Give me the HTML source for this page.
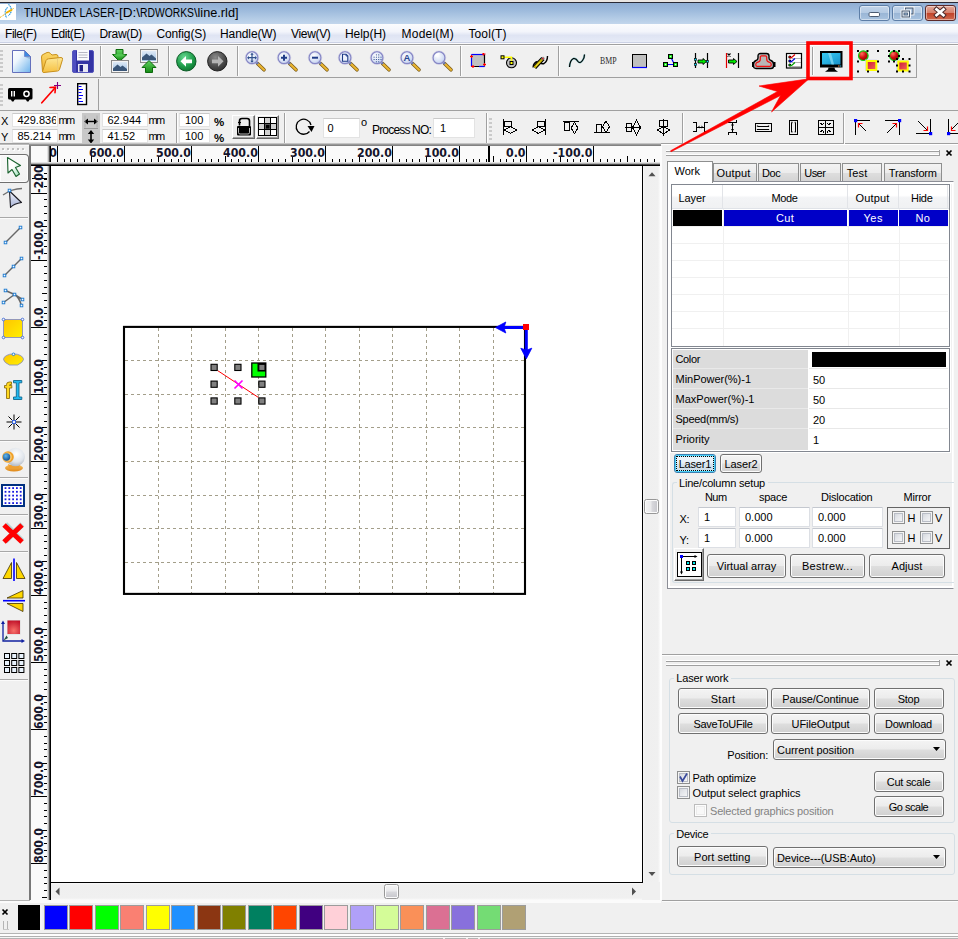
<!DOCTYPE html>
<html>
<head>
<meta charset="utf-8">
<title>THUNDER LASER-[D:\RDWORKS\line.rld]</title>
<style>
html,body{margin:0;padding:0;}
body{width:958px;height:939px;overflow:hidden;background:#f0f0f0;font-family:"Liberation Sans",sans-serif;font-size:11px;color:#000;}
#app{position:relative;width:958px;height:939px;overflow:hidden;background:#f0f0f0;}
.a{position:absolute;}
.t{position:absolute;white-space:nowrap;line-height:1;}
.inp{position:absolute;background:#fff;border:1px solid #e3e3e3;border-top-color:#c9c9c9;box-sizing:border-box;}
.btn{position:absolute;box-sizing:border-box;border:1px solid #707070;border-radius:3px;background:linear-gradient(#f4f4f4 0%,#ececec 48%,#dedede 52%,#d0d0d0 100%);text-align:center;white-space:nowrap;box-shadow:inset 0 0 0 1px #fcfcfc;}
.vsep{position:absolute;width:1px;background:#a6a6a6;box-shadow:1px 0 0 #fff;}
.tab{position:absolute;box-sizing:border-box;border:1px solid #8e8f8f;border-bottom:none;background:linear-gradient(#f3f3f3 0%,#ececec 50%,#dedede 52%,#d4d4d4 100%);height:18px;top:163px;}
.grp{position:absolute;box-sizing:border-box;border:1px solid #d5dfe5;border-radius:3px;}
.cb{position:absolute;box-sizing:border-box;width:13px;height:13px;border:1px solid #8e8f8f;background:linear-gradient(135deg,#c9cdd4 0%,#e4e6ea 45%,#fbfbfb 100%);box-shadow:inset 0 0 0 1px #f4f4f4,inset 0 0 0 2px #b9bdc6;}
svg{position:absolute;overflow:visible;}
</style>
</head>
<body>
<div id="app">
<div class="a" style="left:0px;top:0px;width:958px;height:2px;background:#e9e5e2;"></div>
<div class="a" style="left:0px;top:2px;width:958px;height:1px;background:#2a2a35;"></div>
<div class="a" style="left:0px;top:3px;width:958px;height:21px;background:linear-gradient(#90aed3 0%,#9dbadc 35%,#b4cce6 75%,#c2d6ec 100%);"></div>
<svg style="left:0;top:4px" width="17" height="17" viewBox="0 0 17 17">
<rect x="0" y="0" width="16" height="16" fill="#ffffff"/>
<path d="M8.500 0.300 Q12 4 11.200 7.500 Q10.500 10 8.300 11.800" stroke="#1890e0" stroke-width="1.100" fill="none" stroke-dasharray="1.400 0.700"/>
<path d="M7.600 3.300 Q4.800 6 5.200 9.500 Q5.400 12 6.800 13.800" stroke="#1890e0" stroke-width="1.100" fill="none" stroke-dasharray="1.600 0.600"/>
<path d="M0 13.500 L5.500 9.800" stroke="#f0b000" stroke-width="1" stroke-dasharray="1.100 0.800" fill="none"/>
<path d="M6 9 L12 5.600" stroke="#f0b000" stroke-width="1.800" fill="none"/>
<path d="M12 5.500 L14 4.200" stroke="#f0b000" stroke-width="0.900" stroke-dasharray="1 0.600" fill="none"/>
</svg>
<div class="t" style="left:24px;top:7px;font-size:12px;transform-origin:0 0;transform:scaleX(0.8969);">THUNDER LASER-</div>
<div class="t" style="left:118.6px;top:7px;font-size:12px;transform-origin:0 0;transform:scaleX(1.1247);">[D:\</div>
<div class="t" style="left:140px;top:7px;font-size:12px;transform-origin:0 0;transform:scaleX(0.8616);">RDWORKS</div>
<div class="t" style="left:194px;top:7px;font-size:12px;transform-origin:0 0;transform:scaleX(1.0587);">\line.rld]</div>
<div class="a" style="left:859px;top:5px;width:30.5px;height:16px;box-sizing:border-box;border:1px solid #5d7ea7;border-radius:3px;background:linear-gradient(#c3d5ea 0%,#b4cae3 48%,#9ab6d6 52%,#a9c3df 100%);box-shadow:inset 0 0 0 1px rgba(255,255,255,.45);"></div>
<div class="a" style="left:892px;top:5px;width:30.5px;height:16px;box-sizing:border-box;border:1px solid #5d7ea7;border-radius:3px;background:linear-gradient(#c3d5ea 0%,#b4cae3 48%,#9ab6d6 52%,#a9c3df 100%);box-shadow:inset 0 0 0 1px rgba(255,255,255,.45);"></div>
<div class="a" style="left:925px;top:5px;width:30.5px;height:16px;box-sizing:border-box;border:1px solid #5c2a2a;border-radius:3px;background:linear-gradient(#e3aa9b 0%,#d6806c 48%,#c1432a 52%,#cf6b50 100%);box-shadow:inset 0 0 0 1px rgba(255,255,255,.45);"></div>
<svg style="left:859px;top:5px" width="97" height="16" viewBox="0 0 97 16">
<rect x="10" y="7.500" width="10.500" height="4" rx="1.200" fill="#fff" stroke="#4b5b72" stroke-width="1"/>
<rect x="46.500" y="3" width="7.500" height="6" fill="none" stroke="#fff" stroke-width="2.800"/>
<rect x="46.500" y="3" width="7.500" height="6" fill="#b4cae3" stroke="#44566e" stroke-width="1"/>
<rect x="43" y="6" width="7.500" height="6" fill="#b4cae3" stroke="#fff" stroke-width="2.800"/>
<rect x="43" y="6" width="7.500" height="6" fill="#eaf0f7" stroke="#44566e" stroke-width="1"/>
<rect x="45" y="8" width="3.500" height="2" fill="#9ab6d6" stroke="#44566e" stroke-width="0.800"/>
<path d="M77.500 4.300 L84.500 10.200 M84.500 4.300 L77.500 10.200" stroke="#4a2a2a" stroke-width="4.600" stroke-linecap="square"/>
<path d="M77.500 4.300 L84.500 10.200 M84.500 4.300 L77.500 10.200" stroke="#fff" stroke-width="2.700" stroke-linecap="square"/>
</svg>
<div class="a" style="left:0px;top:24px;width:958px;height:19px;background:linear-gradient(#fbfcfe 0%,#f3f5fb 40%,#dfe4f3 60%,#e4e9f6 85%,#eef1f9 100%);"></div>
<div class="a" style="left:0px;top:42px;width:958px;height:1px;background:#cbd1e4;"></div>
<div class="a" style="left:0px;top:43px;width:958px;height:1px;background:#fbfbfd;"></div>
<div class="t" style="left:5px;top:28px;font-size:12px;letter-spacing:-0.453px;">File(F)</div>
<div class="t" style="left:51px;top:28px;font-size:12px;letter-spacing:-0.455px;">Edit(E)</div>
<div class="t" style="left:99.5px;top:28px;font-size:12px;letter-spacing:-0.310px;">Draw(D)</div>
<div class="t" style="left:156.5px;top:28px;font-size:12px;letter-spacing:-0.132px;">Config(S)</div>
<div class="t" style="left:220px;top:28px;font-size:12px;letter-spacing:-0.095px;">Handle(W)</div>
<div class="t" style="left:291px;top:28px;font-size:12px;letter-spacing:-0.328px;">View(V)</div>
<div class="t" style="left:345px;top:28px;font-size:12px;letter-spacing:-0.049px;">Help(H)</div>
<div class="t" style="left:401.5px;top:28px;font-size:12px;letter-spacing:0.229px;">Model(M)</div>
<div class="t" style="left:468.5px;top:28px;font-size:12px;letter-spacing:0.094px;">Tool(T)</div>
<div class="a" style="left:0px;top:44px;width:958px;height:1px;background:#a0a0a0;"></div>
<div class="a" style="left:0px;top:45px;width:958px;height:1px;background:#fcfcfc;"></div>
<div class="a" style="left:0px;top:46px;width:916px;height:31px;background:#f0f0f0;"></div>
<div class="a" style="left:0px;top:77px;width:917px;height:1px;background:#a0a0a0;"></div>
<div class="a" style="left:916px;top:45px;width:1px;height:33px;background:#a0a0a0;"></div>
<div class="a" style="left:0px;top:110px;width:958px;height:1px;background:#a0a0a0;"></div>
<div class="a" style="left:98px;top:79px;width:1px;height:31px;background:#a0a0a0;"></div>
<div class="a" style="left:0px;top:143px;width:958px;height:1px;background:#a0a0a0;"></div>
<div class="a" style="left:661px;top:144px;width:297px;height:1px;background:#fff;"></div>
<div class="a" style="left:0px;top:50px;width:3px;height:24px;background:repeating-linear-gradient(#cacaca 0 2px,transparent 2px 4px);"></div>
<div class="a" style="left:0px;top:84px;width:3px;height:22px;background:repeating-linear-gradient(#cacaca 0 2px,transparent 2px 4px);"></div>
<div class="a" style="left:489px;top:118px;width:3px;height:24px;background:repeating-linear-gradient(#cacaca 0 2px,transparent 2px 4px);"></div>
<svg width="0" height="0" style="left:0;top:0"><defs>
<linearGradient id="gDoc" x1="0" y1="0" x2="1" y2="1"><stop offset="0" stop-color="#ffffff"/><stop offset="0.35" stop-color="#eef6fd"/><stop offset="1" stop-color="#6cb2ec"/></linearGradient>
<linearGradient id="gFold" x1="0" y1="0" x2="0" y2="1"><stop offset="0" stop-color="#fbd868"/><stop offset="1" stop-color="#f0b030"/></linearGradient>
<linearGradient id="gFold2" x1="0" y1="0" x2="0" y2="1"><stop offset="0" stop-color="#fde898"/><stop offset="1" stop-color="#f6c040"/></linearGradient>
<linearGradient id="gGreen" x1="0" y1="0" x2="0" y2="1"><stop offset="0" stop-color="#5fd25f"/><stop offset="1" stop-color="#158a15"/></linearGradient>
<linearGradient id="gSky" x1="0" y1="0" x2="0" y2="1"><stop offset="0" stop-color="#dfeaf6"/><stop offset="1" stop-color="#9fc0e4"/></linearGradient>
<radialGradient id="gBall" cx="0.4" cy="0.3" r="0.8"><stop offset="0" stop-color="#66d890"/><stop offset="0.6" stop-color="#1c9a48"/><stop offset="1" stop-color="#0b6a2c"/></radialGradient>
<radialGradient id="gBallG" cx="0.4" cy="0.3" r="0.8"><stop offset="0" stop-color="#8a8a8a"/><stop offset="0.6" stop-color="#4a4a4a"/><stop offset="1" stop-color="#2a2a2a"/></radialGradient>
<radialGradient id="gLens" cx="0.4" cy="0.35" r="0.7"><stop offset="0" stop-color="#ffffff"/><stop offset="0.7" stop-color="#d4def4"/><stop offset="1" stop-color="#b4c2ea"/></radialGradient>
<radialGradient id="gRed" cx="0.35" cy="0.3" r="0.8"><stop offset="0" stop-color="#ff7060"/><stop offset="0.5" stop-color="#d01010"/><stop offset="1" stop-color="#800000"/></radialGradient>
<linearGradient id="gRedSq" x1="0" y1="0" x2="1" y2="1"><stop offset="0" stop-color="#c81838"/><stop offset="1" stop-color="#f86858"/></linearGradient>
<linearGradient id="gMon" x1="0" y1="0" x2="1" y2="1"><stop offset="0" stop-color="#38c8f0"/><stop offset="0.5" stop-color="#28b0e0"/><stop offset="1" stop-color="#1890c8"/></linearGradient>
</defs></svg>
<svg style="left:12px;top:50px" width="19" height="23" viewBox="0 0 19 23"><path d="M0.500 0.500 H12.500 L18.500 6.500 V22.500 H0.500 Z" fill="url(#gDoc)" stroke="#6470bc" stroke-width="1"/>
<path d="M12.500 0.500 V6.500 H18.500 Z" fill="#3c8ae0" stroke="#6470bc" stroke-width="0.600"/>
<path d="M13 7 H18 V9 Z" fill="#7fa6cc" opacity="0.700"/></svg>
<svg style="left:40px;top:51px" width="24" height="22" viewBox="0 0 24 22"><path d="M2.500 20.500 L1.500 6 Q1.500 3.500 4 3 L7 1.500 Q9 0.800 10.500 2.500 L12 4 L16 3.500 Q18 3.500 18 5.500 L18 7" fill="url(#gFold)" stroke="#c8901c" stroke-width="1"/>
<path d="M2.500 20.500 L6 9.500 Q6.600 8 8.500 7.800 L21 6.500 Q23 6.500 22.500 8.500 L19.500 18.500 Q19 19.800 17.500 20 L4 21.500 Q2.500 21.500 2.500 20.500 Z" fill="url(#gFold2)" stroke="#c8901c" stroke-width="1"/>
<path d="M17.500 7.200 V19.500" stroke="#e8c878" stroke-width="0.800" fill="none"/></svg>
<svg style="left:72px;top:50px" width="22" height="23" viewBox="0 0 22 23"><path d="M2 0.500 H20 Q21.500 0.500 21.500 2 V21 Q21.500 22.500 20 22.500 H2 Q0.500 22.500 0.500 21 V2 Q0.500 0.500 2 0.500 Z" fill="#3434a4" stroke="#5858bc" stroke-width="1"/>
<rect x="1" y="1" width="3" height="21" fill="#4e4ec0"/>
<rect x="5" y="0" width="12" height="10.500" fill="#fbfbfd"/>
<path d="M6.500 2.500 H15.500 M6.500 5 H15.500 M6.500 7.500 H15.500" stroke="#b8b8c4" stroke-width="1"/>
<rect x="6" y="14" width="10" height="8" fill="#e8e8f4"/>
<rect x="7.500" y="15" width="3.500" height="6.500" fill="#202088"/></svg>
<div class="a" style="left:100px;top:46px;width:1px;height:30px;background:#a0a0a0;"></div>
<div class="a" style="left:101px;top:46px;width:1px;height:30px;background:#fdfdfd;"></div>
<svg style="left:111px;top:49px" width="19" height="24" viewBox="0 0 19 24"><path d="M5 0.500 H12 V5.500 H16 L8.500 12.500 L1.500 5.500 H5 Z" fill="url(#gGreen)" stroke="#0c6a0c" stroke-width="1"/>
<rect x="0.500" y="11.500" width="17" height="12" fill="#f4f4f4" stroke="#8a8a8a" stroke-width="1"/>
<rect x="2" y="13" width="14" height="9" fill="url(#gSky)"/>
<path d="M2 22 V19.500 L6.500 15.500 L9.500 18 L11.500 16.500 L16 20 V22 Z" fill="#3a5678"/>
<path d="M3 5.500 H14 L8.500 11 Z" fill="url(#gGreen)"/></svg>
<svg style="left:139px;top:49px" width="19" height="24" viewBox="0 0 19 24"><rect x="1.500" y="0.500" width="17" height="13" fill="#f4f4f4" stroke="#8a8a8a" stroke-width="1"/>
<rect x="3" y="2" width="14" height="10" fill="url(#gSky)"/>
<path d="M3 11 V8.500 L7.500 4.500 L10.500 7 L12.500 5.500 L17 9.500 V11 Z" fill="#3a5678"/>
<path d="M6.500 23.500 V18.500 H3 L10 11.500 L17 18.500 H13.500 V23.500 Z" fill="url(#gGreen)" stroke="#0c6a0c" stroke-width="1"/></svg>
<div class="a" style="left:168px;top:46px;width:1px;height:30px;background:#a0a0a0;"></div>
<div class="a" style="left:169px;top:46px;width:1px;height:30px;background:#fdfdfd;"></div>
<svg style="left:176px;top:51px" width="21" height="21" viewBox="0 0 21 21"><circle cx="10.300" cy="10.300" r="9.700" fill="url(#gBall)" stroke="#0a5a24" stroke-width="1"/>
<path d="M4.500 10.300 L10 5 V8.500 H16 V12.200 H10 V15.700 Z" fill="#fff"/></svg>
<svg style="left:207px;top:51px" width="21" height="21" viewBox="0 0 21 21"><circle cx="10.300" cy="10.300" r="9.700" fill="url(#gBallG)" stroke="#222" stroke-width="1"/>
<path d="M16.500 10.300 L11 5 V8.500 H5 V12.200 H11 V15.700 Z" fill="#b4b4b4"/></svg>
<div class="a" style="left:237px;top:46px;width:1px;height:30px;background:#a0a0a0;"></div>
<div class="a" style="left:238px;top:46px;width:1px;height:30px;background:#fdfdfd;"></div>
<svg style="left:243.5px;top:50px" width="22" height="22" viewBox="0 0 22 22"><path d="M13.500 13.500 L20 19.800" stroke="#7a5a18" stroke-width="3.600" stroke-linecap="round"/>
<path d="M13.800 13.800 L20 19.800" stroke="#eab530" stroke-width="2.200" stroke-linecap="round"/>
<path d="M12 12 L14 14" stroke="#6878b8" stroke-width="2.400"/>
<circle cx="8" cy="7.700" r="6" fill="url(#gLens)" stroke="#8484c4" stroke-width="1.300"/>
<circle cx="8" cy="7.700" r="6.800" fill="none" stroke="#c0c0e0" stroke-width="0.600" opacity="0.700"/><path d="M8 3.700 V11.700 M4 7.700 H12" stroke="#30508c" stroke-width="1.200"/><path d="M8 2.700 L6.300 4.700 H9.700 Z M8 12.700 L6.300 10.700 H9.700 Z M3 7.700 L5 6 V9.400 Z M13 7.700 L11 6 V9.400 Z" fill="#30508c"/></svg>
<svg style="left:275.5px;top:50px" width="22" height="22" viewBox="0 0 22 22"><path d="M13.500 13.500 L20 19.800" stroke="#7a5a18" stroke-width="3.600" stroke-linecap="round"/>
<path d="M13.800 13.800 L20 19.800" stroke="#eab530" stroke-width="2.200" stroke-linecap="round"/>
<path d="M12 12 L14 14" stroke="#6878b8" stroke-width="2.400"/>
<circle cx="8" cy="7.700" r="6" fill="url(#gLens)" stroke="#8484c4" stroke-width="1.300"/>
<circle cx="8" cy="7.700" r="6.800" fill="none" stroke="#c0c0e0" stroke-width="0.600" opacity="0.700"/><path d="M8 4.700 V10.700 M5 7.700 H11" stroke="#203c88" stroke-width="2"/></svg>
<svg style="left:306.5px;top:50px" width="22" height="22" viewBox="0 0 22 22"><path d="M13.500 13.500 L20 19.800" stroke="#7a5a18" stroke-width="3.600" stroke-linecap="round"/>
<path d="M13.800 13.800 L20 19.800" stroke="#eab530" stroke-width="2.200" stroke-linecap="round"/>
<path d="M12 12 L14 14" stroke="#6878b8" stroke-width="2.400"/>
<circle cx="8" cy="7.700" r="6" fill="url(#gLens)" stroke="#8484c4" stroke-width="1.300"/>
<circle cx="8" cy="7.700" r="6.800" fill="none" stroke="#c0c0e0" stroke-width="0.600" opacity="0.700"/><path d="M5 7.700 H11" stroke="#203c88" stroke-width="2"/></svg>
<svg style="left:337px;top:50px" width="22" height="22" viewBox="0 0 22 22"><path d="M13.500 13.500 L20 19.800" stroke="#7a5a18" stroke-width="3.600" stroke-linecap="round"/>
<path d="M13.800 13.800 L20 19.800" stroke="#eab530" stroke-width="2.200" stroke-linecap="round"/>
<path d="M12 12 L14 14" stroke="#6878b8" stroke-width="2.400"/>
<circle cx="8" cy="7.700" r="6" fill="url(#gLens)" stroke="#8484c4" stroke-width="1.300"/>
<circle cx="8" cy="7.700" r="6.800" fill="none" stroke="#c0c0e0" stroke-width="0.600" opacity="0.700"/><path d="M5.500 4.200 H9 L10.800 6 V11.200 H5.500 Z" fill="#eef2fc" stroke="#203c88" stroke-width="1.100"/><path d="M9 4.200 V6 H10.800" fill="none" stroke="#203c88" stroke-width="0.800"/></svg>
<svg style="left:368.5px;top:50px" width="22" height="22" viewBox="0 0 22 22"><path d="M13.500 13.500 L20 19.800" stroke="#7a5a18" stroke-width="3.600" stroke-linecap="round"/>
<path d="M13.800 13.800 L20 19.800" stroke="#eab530" stroke-width="2.200" stroke-linecap="round"/>
<path d="M12 12 L14 14" stroke="#6878b8" stroke-width="2.400"/>
<circle cx="8" cy="7.700" r="6" fill="url(#gLens)" stroke="#8484c4" stroke-width="1.300"/>
<circle cx="8" cy="7.700" r="6.800" fill="none" stroke="#c0c0e0" stroke-width="0.600" opacity="0.700"/><rect x="4.6" y="6.7" width="1" height="1" fill="#30508c"/><rect x="4.6" y="9.0" width="1" height="1" fill="#30508c"/><rect x="6.9" y="4.4" width="1" height="1" fill="#30508c"/><rect x="6.9" y="6.7" width="1" height="1" fill="#30508c"/><rect x="6.9" y="9.0" width="1" height="1" fill="#30508c"/><rect x="6.9" y="11.3" width="1" height="1" fill="#30508c"/><rect x="9.2" y="4.4" width="1" height="1" fill="#30508c"/><rect x="9.2" y="6.7" width="1" height="1" fill="#30508c"/><rect x="9.2" y="9.0" width="1" height="1" fill="#30508c"/><rect x="9.2" y="11.3" width="1" height="1" fill="#30508c"/><rect x="11.5" y="6.7" width="1" height="1" fill="#30508c"/><rect x="11.5" y="9.0" width="1" height="1" fill="#30508c"/></svg>
<svg style="left:399px;top:50px" width="22" height="22" viewBox="0 0 22 22"><path d="M13.500 13.500 L20 19.800" stroke="#7a5a18" stroke-width="3.600" stroke-linecap="round"/>
<path d="M13.800 13.800 L20 19.800" stroke="#eab530" stroke-width="2.200" stroke-linecap="round"/>
<path d="M12 12 L14 14" stroke="#6878b8" stroke-width="2.400"/>
<circle cx="8" cy="7.700" r="6" fill="url(#gLens)" stroke="#8484c4" stroke-width="1.300"/>
<circle cx="8" cy="7.700" r="6.800" fill="none" stroke="#c0c0e0" stroke-width="0.600" opacity="0.700"/><text x="8" y="11.200" font-family="Liberation Sans,sans-serif" font-weight="bold" font-size="9.500" text-anchor="middle" fill="#284890">A</text></svg>
<svg style="left:431px;top:50px" width="22" height="22" viewBox="0 0 22 22"><path d="M13.500 13.500 L20 19.800" stroke="#7a5a18" stroke-width="3.600" stroke-linecap="round"/>
<path d="M13.800 13.800 L20 19.800" stroke="#eab530" stroke-width="2.200" stroke-linecap="round"/>
<path d="M12 12 L14 14" stroke="#6878b8" stroke-width="2.400"/>
<circle cx="8" cy="7.700" r="6" fill="url(#gLens)" stroke="#8484c4" stroke-width="1.300"/>
<circle cx="8" cy="7.700" r="6.800" fill="none" stroke="#c0c0e0" stroke-width="0.600" opacity="0.700"/><path d="M4.500 6.500 Q5.500 3.800 8.500 3.800" stroke="#fff" stroke-width="1.600" fill="none"/></svg>
<div class="a" style="left:459.5px;top:46px;width:1px;height:30px;background:#a0a0a0;"></div>
<div class="a" style="left:460.5px;top:46px;width:1px;height:30px;background:#fdfdfd;"></div>
<svg style="left:470px;top:53px" width="17" height="16" viewBox="0 0 17 16"><rect x="1.500" y="1.500" width="13" height="12" fill="#c0c0c0"/>
<path d="M1.500 1.500 H14.500" stroke="#0000ff" stroke-width="1.200"/><path d="M1.500 1.500 V13.500" stroke="#0000ff" stroke-width="1.200"/>
<path d="M14.500 1.500 V13.500 M1.500 13.500 H9" stroke="#000" stroke-width="1.200"/><path d="M9 13.500 H14.500" stroke="#0000ff" stroke-width="1.200"/>
<path d="M0 3.500 H3 M1.500 2 V5 M12 1 H15.500 M13.500 0 V2.500 M13 11.500 H16 M14.500 10 V13 M1 13.500 H4.500 M3 12 V15" stroke="#ff0000" stroke-width="1.200"/></svg>
<svg style="left:500px;top:53px" width="20" height="18" viewBox="0 0 20 18"><circle cx="11.500" cy="9.800" r="5" fill="#c0c0c0" stroke="#000" stroke-width="1.100"/>
<path d="M3 4.300 H11.500 V9" stroke="#ffff00" stroke-width="1.400" fill="none"/>
<rect x="1" y="2.800" width="3" height="3" fill="#ffff00" stroke="#000" stroke-width="1"/>
<rect x="10" y="8.500" width="3" height="3" fill="#ffff00" stroke="#000" stroke-width="1"/></svg>
<svg style="left:531px;top:53px" width="20" height="18" viewBox="0 0 20 18"><path d="M2 14.500 Q2.500 9.500 6.500 8.500" stroke="#000" stroke-width="1.300" fill="none"/>
<path d="M9 9.500 Q11 11.500 13 10.500 Q16.500 8.500 16.500 3" stroke="#000" stroke-width="1.400" fill="none"/>
<path d="M3.500 14.500 L12 5.500" stroke="#000" stroke-width="4.400" stroke-linecap="butt"/>
<path d="M3.500 14.500 L11 6.500" stroke="#c8b400" stroke-width="2.400"/>
<path d="M5 13 L9 8.800" stroke="#f0e040" stroke-width="0.900"/>
<path d="M11 6.500 L13 4.300" stroke="#909090" stroke-width="2.600"/><rect x="11" y="4.800" width="1.500" height="1.500" fill="#e02020"/></svg>
<div class="a" style="left:558px;top:46px;width:1px;height:30px;background:#a0a0a0;"></div>
<div class="a" style="left:559px;top:46px;width:1px;height:30px;background:#fdfdfd;"></div>
<svg style="left:567px;top:53px" width="20" height="16" viewBox="0 0 20 16"><path d="M2.500 14 Q3 7 6.500 5.500 Q9 5 11 8.500 Q13 11 15.500 7.500 Q17.500 5 17.500 1.500" stroke="#008890" stroke-width="1.900" fill="none" opacity="0.500"/>
<path d="M2.500 14 Q3 7 6.500 5.500 Q9 5 11 8.500 Q13 11 15.500 7.500 Q17.500 5 17.500 1.500" stroke="#000" stroke-width="1.100" fill="none"/></svg>
<div class="t" style="left:599.8px;top:56.5px;font-size:9.5px;font-family:'Liberation Serif',sans-serif;transform-origin:0 0;transform:scaleX(0.8218);color:#2c2c2c;">BMP</div>
<svg style="left:632px;top:54px" width="16" height="14" viewBox="0 0 16 14"><rect x="0.500" y="0.500" width="14" height="13" fill="#c0c0c0" stroke="#000" stroke-width="1"/><path d="M0 13.500 H15" stroke="#0000ff" stroke-width="1.200"/></svg>
<svg style="left:662px;top:53px" width="18" height="16" viewBox="0 0 18 16"><path d="M8.500 3.500 L12.500 11.500 H3" stroke="#0000ff" stroke-width="1.200" fill="none"/>
<rect x="6.500" y="1.500" width="4" height="4" fill="#00e000" stroke="#000"/><rect x="1.500" y="9.500" width="4" height="4" fill="#00e000" stroke="#000"/><rect x="11.500" y="9.500" width="4" height="4" fill="#00e000" stroke="#000"/>
<rect x="7.800" y="2.800" width="1.500" height="1.500" fill="#d0ffd0"/><rect x="2.800" y="10.800" width="1.500" height="1.500" fill="#d0ffd0"/><rect x="12.800" y="10.800" width="1.500" height="1.500" fill="#d0ffd0"/></svg>
<svg style="left:693px;top:52px" width="17" height="17" viewBox="0 0 17 17"><path d="M2.500 1 V16 M14.500 1 V16" stroke="#000" stroke-width="1.200"/>
<path d="M5 8 H10 V6.500 L13.500 9.500 L10 12.500 V11 H5 Z" fill="#00e800" stroke="#000" stroke-width="0.900"/>
<rect x="1.500" y="6.500" width="2" height="2" fill="#00e0ff" stroke="#000" stroke-width="0.600"/><rect x="1.500" y="11.500" width="2" height="2" fill="#00e0ff" stroke="#000" stroke-width="0.600"/><rect x="13.500" y="8.500" width="2" height="2" fill="#00e0ff" stroke="#000" stroke-width="0.600"/></svg>
<svg style="left:725px;top:52px" width="16" height="17" viewBox="0 0 16 17"><path d="M1.500 1 V16" stroke="#e00000" stroke-width="1.200"/><path d="M13.500 1 V16" stroke="#000" stroke-width="1.200"/>
<path d="M2.500 1.500 L5.500 4.500 M5.500 1.500 L2.500 4.500" stroke="#000" stroke-width="1.100"/>
<path d="M3.500 8 H8.500 V6.500 L12 9.500 L8.500 12.500 V11 H3.500 Z" fill="#00e800" stroke="#000" stroke-width="0.900"/></svg>
<svg style="left:752px;top:52px" width="24" height="18" viewBox="0 0 24 18"><path d="M8.500 1.500 H14.500 Q17 1.500 17 4 V6 Q17 8 19 8.500 Q21.500 9.500 21.500 12 V14 Q21.500 16.500 19 16.500 H4 Q1.500 16.500 1.500 14 V12 Q1.500 9.500 4 8.500 Q6 8 6 6 V4 Q6 1.500 8.500 1.500 Z" fill="#b8b8b8" stroke="#000" stroke-width="1.400"/>
<path d="M9.700 3.900 H13.300 Q14.700 3.900 14.700 5.200 V7 Q14.700 9.600 17 10.200 Q19.200 10.800 19.200 12.200 V13 Q19.200 14.300 17.900 14.300 H5.100 Q3.800 14.300 3.800 13 V12.200 Q3.800 10.800 6 10.200 Q8.300 9.600 8.300 7 V5.200 Q8.300 3.900 9.700 3.900 Z" fill="none" stroke="#f01010" stroke-width="1.200"/>
<rect x="0" y="10" width="1.800" height="5" fill="#000"/><rect x="21.700" y="10" width="1.800" height="5" fill="#000"/></svg>
<svg style="left:786px;top:53px" width="17" height="16" viewBox="0 0 17 16"><rect x="0.500" y="0.500" width="15" height="14.500" fill="#fff" stroke="#000" stroke-width="1.200"/>
<path d="M6 5.500 H15 M6 9.500 H15 M6 13.500 H15" stroke="#a0a0a0" stroke-width="0.800"/>
<circle cx="3.800" cy="4" r="1.500" fill="#000"/><circle cx="3.800" cy="8" r="1.500" fill="#000"/><circle cx="3.800" cy="12" r="1.500" fill="#000"/>
<path d="M3 3.500 L5 5 L9 1.500" stroke="#e00000" stroke-width="1.100" fill="none"/><path d="M3 7.500 L5 9 L9 5.500" stroke="#0000e0" stroke-width="1.100" fill="none"/><path d="M3 11.500 L5 13 L9 9.500" stroke="#00a000" stroke-width="1.100" fill="none"/></svg>
<div class="a" style="left:812px;top:47px;width:1px;height:28px;background:#a0a0a0;"></div>
<div class="a" style="left:813px;top:47px;width:1px;height:28px;background:#fdfdfd;"></div>
<svg style="left:819px;top:50px" width="25" height="23" viewBox="0 0 25 23"><rect x="1" y="1" width="22.500" height="16.500" fill="#000"/>
<rect x="3" y="3" width="18.500" height="11.500" fill="url(#gMon)"/>
<path d="M9 3 L12 3 L15 14.500 L12.500 14.500 Z" fill="#8fe0f8" opacity="0.700"/>
<path d="M9.500 17.500 H15.500 L16 19.500 L19 21.800 H6 L9 19.500 Z" fill="#000"/>
<rect x="19" y="15.500" width="1.500" height="1" fill="#f08030"/><rect x="20.700" y="15.500" width="1.500" height="1" fill="#30c0f0"/></svg>
<svg style="left:857px;top:50px" width="24" height="23" viewBox="0 0 24 23"><circle cx="6.300" cy="5.700" r="4.800" fill="url(#gRed)" stroke="#10d010" stroke-width="1.200"/>
<rect x="8" y="9.500" width="12" height="11.500" fill="#c8c8f0" opacity="0.600"/>
<rect x="9.800" y="11" width="9.500" height="9" fill="url(#gRedSq)" stroke="#ffff00" stroke-width="2"/><rect x="0" y="0" width="2" height="2" fill="#000"/><rect x="9.5" y="0" width="2" height="2" fill="#000"/><rect x="20" y="0" width="2" height="2" fill="#000"/><rect x="0" y="10.5" width="2" height="2" fill="#000"/><rect x="20" y="10.5" width="2" height="2" fill="#000"/><rect x="0" y="20.5" width="2" height="2" fill="#000"/><rect x="10" y="20.5" width="2" height="2" fill="#000"/><rect x="20" y="20.5" width="2" height="2" fill="#000"/></svg>
<svg style="left:888px;top:50px" width="24" height="23" viewBox="0 0 24 23"><circle cx="6.300" cy="5.700" r="4.800" fill="url(#gRed)" stroke="#10d010" stroke-width="1.200"/>
<rect x="8" y="9.500" width="12" height="11.500" fill="#c8c8f0" opacity="0.600"/>
<rect x="10.300" y="11.500" width="9.500" height="9" fill="url(#gRedSq)" stroke="#ffff00" stroke-width="2"/><rect x="0" y="0" width="2" height="2" fill="#000"/><rect x="5" y="0" width="2" height="2" fill="#000"/><rect x="10" y="0" width="2" height="2" fill="#000"/><rect x="0" y="5" width="2" height="2" fill="#000"/><rect x="10" y="5" width="2" height="2" fill="#000"/><rect x="0" y="10.5" width="2" height="2" fill="#000"/><rect x="5" y="10.5" width="2" height="2" fill="#000"/><rect x="8" y="8" width="2" height="2" fill="#000"/><rect x="14" y="8" width="2" height="2" fill="#000"/><rect x="20.5" y="8" width="2" height="2" fill="#000"/><rect x="8" y="14.5" width="2" height="2" fill="#000"/><rect x="20.5" y="14.5" width="2" height="2" fill="#000"/><rect x="8" y="20.5" width="2" height="2" fill="#000"/><rect x="14" y="20.5" width="2" height="2" fill="#000"/><rect x="20.5" y="20.5" width="2" height="2" fill="#000"/></svg>
<svg style="left:8px;top:87px" width="26" height="16" viewBox="0 0 26 16"><rect x="0" y="1" width="24.500" height="11.500" rx="1.500" fill="#000"/>
<path d="M2.500 12 H7 L5.500 14.500 H4 Z M17.500 12 H22 L20.500 14.500 H19 Z" fill="#000"/>
<rect x="3" y="4" width="1.400" height="5.500" fill="#fff"/><rect x="5.600" y="4" width="1.400" height="5.500" fill="#fff"/>
<circle cx="18.500" cy="6.800" r="2.600" fill="#000" stroke="#fff" stroke-width="1.500"/></svg>
<svg style="left:40px;top:81px" width="24" height="24" viewBox="0 0 24 24"><path d="M1.800 21.800 L14.500 7.500" stroke="#ff0000" stroke-width="1.700" stroke-linecap="round"/>
<path d="M10 6.500 L15.500 6.200 L15 11.800" stroke="#ff0000" stroke-width="1.600" fill="none" stroke-linecap="round"/>
<path d="M17.500 1 V8 M14 4.500 H21" stroke="#800080" stroke-width="1.100"/></svg>
<svg style="left:77px;top:83px" width="11" height="23" viewBox="0 0 11 23"><rect x="0.700" y="0.700" width="8.800" height="20.800" fill="#fff" stroke="#000" stroke-width="1.400"/>
<path d="M1.500 3.500 H4.500 M1.500 6.500 H6 M1.500 9.500 H4.500 M1.500 12.500 H6 M1.500 15.500 H4.500 M1.500 18.500 H6" stroke="#0000ff" stroke-width="1.100"/></svg>
<div class="t" style="left:1px;top:116.2px;font-size:11px;letter-spacing:-0.844px;">X</div>
<div class="t" style="left:1px;top:132.2px;font-size:11px;letter-spacing:-0.844px;">Y</div>
<div class="inp" style="left:12px;top:113px;width:46px;height:14px;overflow:hidden;"><span class="t" style="left:4.5px;top:1.2px;font-size:11px;">429.836</span></div>
<div class="inp" style="left:12px;top:129px;width:46px;height:14px;overflow:hidden;"><span class="t" style="left:4.5px;top:1.2px;font-size:11px;">85.214</span></div>
<div class="t" style="left:58.5px;top:115.3px;font-size:11px;letter-spacing:-1.564px;">mm</div>
<div class="t" style="left:58.5px;top:131.3px;font-size:11px;letter-spacing:-1.564px;">mm</div>
<div class="a" style="left:55.5px;top:114px;width:1.5px;height:12px;background:#fff;"></div>
<div class="a" style="left:82px;top:113px;width:18px;height:31px;background:#c8c8c8;"></div>
<div class="a" style="left:84px;top:128px;width:14px;height:1px;background:#9a9a9a;"></div>
<svg style="left:82px;top:113px" width="18" height="31" viewBox="0 0 18 31"><path d="M3 8.500 H15" stroke="#000" stroke-width="1.400"/><path d="M2 8.500 L6 5.500 V11.500 Z M16 8.500 L12 5.500 V11.500 Z" fill="#000"/>
<path d="M3 2.500 V14.500 M15 2.500 V14.500" stroke="#a8a8a8" stroke-width="0.800"/>
<path d="M9 19 V28" stroke="#000" stroke-width="1.600"/><path d="M9 17 L5.800 21 H12.200 Z M9 30.500 L5.800 26.500 H12.200 Z" fill="#000"/><path d="M5.500 30.500 H12.500" stroke="#000" stroke-width="1"/></svg>
<div class="inp" style="left:102px;top:113px;width:46px;height:14px;overflow:hidden;"><span class="t" style="left:4.5px;top:1.2px;font-size:11px;">62.944</span></div>
<div class="inp" style="left:102px;top:129px;width:46px;height:14px;overflow:hidden;"><span class="t" style="left:4.5px;top:1.2px;font-size:11px;">41.52</span></div>
<div class="t" style="left:148.5px;top:115.3px;font-size:11px;letter-spacing:-1.564px;">mm</div>
<div class="t" style="left:148.5px;top:131.3px;font-size:11px;letter-spacing:-1.564px;">mm</div>
<div class="a" style="left:176px;top:113px;width:1px;height:31px;background:#a0a0a0;"></div>
<div class="a" style="left:177px;top:113px;width:1px;height:31px;background:#fdfdfd;"></div>
<div class="inp" style="left:179px;top:113px;width:31px;height:14px;overflow:hidden;"><span class="t" style="left:5px;top:1.2px;font-size:11px;">100</span></div>
<div class="inp" style="left:179px;top:129px;width:31px;height:14px;overflow:hidden;"><span class="t" style="left:5px;top:1.2px;font-size:11px;">100</span></div>
<div class="t" style="left:214px;top:116.8px;font-size:11.5px;font-weight:bold;letter-spacing:0.266px;">%</div>
<div class="t" style="left:214px;top:132.8px;font-size:11.5px;font-weight:bold;letter-spacing:0.266px;">%</div>
<div class="a" style="left:232px;top:115px;width:23px;height:24px;box-sizing:border-box;background:#ececec;border:1px solid;border-color:#fff #6a6a6a #6a6a6a #fff;box-shadow:inset -1px -1px 0 #a0a0a0;"></div>
<div class="a" style="left:256px;top:115px;width:23px;height:24px;box-sizing:border-box;background:#ececec;border:1px solid;border-color:#fff #6a6a6a #6a6a6a #fff;box-shadow:inset -1px -1px 0 #a0a0a0;"></div>
<svg style="left:236px;top:117px" width="16" height="20" viewBox="0 0 16 20"><path d="M3.500 8.500 V4 Q3.500 1.500 6 1.500 H11 Q13.500 1.500 13.500 4 V9" stroke="#000" stroke-width="1.600" fill="none"/>
<path d="M2 5.500 H5" stroke="#000" stroke-width="1.200"/>
<rect x="1" y="9" width="14" height="9.500" rx="1" fill="#000"/>
<path d="M2.500 11 V15.500 Q2.500 17 4 17 H12 Q13.500 17 13.500 15.500 V11" stroke="#e8e8e8" stroke-width="0.800" fill="none"/></svg>
<svg style="left:258px;top:117px" width="19" height="20" viewBox="0 0 19 20"><rect x="0" y="0" width="19" height="19" fill="#000"/><rect x="1" y="1" width="5" height="5" fill="#ffffff"/><rect x="1" y="7" width="5" height="5" fill="#d2d2d2"/><rect x="1" y="13" width="5" height="5" fill="#ffffff"/><rect x="7" y="1" width="5" height="5" fill="#d2d2d2"/><rect x="7" y="7" width="5" height="5" fill="#181818"/><rect x="7" y="13" width="5" height="5" fill="#d2d2d2"/><rect x="13" y="1" width="5" height="5" fill="#ffffff"/><rect x="13" y="7" width="5" height="5" fill="#d2d2d2"/><rect x="13" y="13" width="5" height="5" fill="#ffffff"/><rect x="7" y="7" width="5" height="5" fill="#585858"/><rect x="8" y="8" width="3.500" height="3.500" fill="#000"/></svg>
<div class="a" style="left:284px;top:113px;width:1px;height:31px;background:#a0a0a0;"></div>
<div class="a" style="left:285px;top:113px;width:1px;height:31px;background:#fdfdfd;"></div>
<svg style="left:294px;top:118px" width="22" height="20" viewBox="0 0 22 20"><path d="M15.500 13.500 A7.500 7.500 0 1 1 17 7" stroke="#000" stroke-width="1.300" fill="none"/>
<path d="M13.500 8 H20.500 L17.500 14 Z" fill="#000"/></svg>
<div class="inp" style="left:323px;top:118px;width:37px;height:20px;overflow:hidden;"><span class="t" style="left:3.5px;top:4.2px;font-size:11px;">0</span></div>
<div class="t" style="left:361px;top:117px;font-size:11px;">o</div>
<div class="t" style="left:372px;top:123.6px;font-size:12px;letter-spacing:-0.820px;">Process NO:</div>
<div class="inp" style="left:433px;top:118px;width:42px;height:20px;overflow:hidden;"><span class="t" style="left:6px;top:4.2px;font-size:11px;">1</span></div>
<div class="a" style="left:486px;top:113px;width:1px;height:31px;background:#a0a0a0;"></div>
<div class="a" style="left:487px;top:113px;width:1px;height:31px;background:#fdfdfd;"></div>
<svg style="left:500px;top:118px" width="20" height="18" viewBox="0 0 20 18"><path d="M3.500 1 V17" stroke="#000" stroke-width="1" fill="none" shape-rendering="crispEdges" stroke-width="1.300"/><rect x="4.500" y="3.500" width="7" height="5" stroke="#000" stroke-width="1" fill="none" shape-rendering="crispEdges"/><path d="M4.500 12 L10.500 8.500 L16.500 12 L10.500 15.500 Z" stroke="#000" stroke-width="1" fill="none" shape-rendering="crispEdges"/></svg>
<svg style="left:530px;top:118px" width="20" height="18" viewBox="0 0 20 18"><path d="M15.500 1 V17" stroke="#000" stroke-width="1" fill="none" shape-rendering="crispEdges" stroke-width="1.300"/><rect x="7.500" y="3.500" width="7" height="5" stroke="#000" stroke-width="1" fill="none" shape-rendering="crispEdges"/><path d="M2.500 12 L8.500 8.500 L14.500 12 L8.500 15.500 Z" stroke="#000" stroke-width="1" fill="none" shape-rendering="crispEdges"/></svg>
<svg style="left:561px;top:118px" width="20" height="18" viewBox="0 0 20 18"><path d="M1.500 3.500 H18" stroke="#000" stroke-width="1" fill="none" shape-rendering="crispEdges" stroke-width="1.300"/><rect x="3.500" y="4.500" width="5" height="8" stroke="#000" stroke-width="1" fill="none" shape-rendering="crispEdges"/><path d="M13.500 4.500 L17 10 L13.500 15.500 L10 10 Z" stroke="#000" stroke-width="1" fill="none" shape-rendering="crispEdges"/></svg>
<svg style="left:592px;top:118px" width="20" height="18" viewBox="0 0 20 18"><path d="M1.500 14.500 H18" stroke="#000" stroke-width="1" fill="none" shape-rendering="crispEdges" stroke-width="1.300"/><rect x="4.500" y="6.500" width="5" height="8" stroke="#000" stroke-width="1" fill="none" shape-rendering="crispEdges"/><path d="M14 3 L17.500 8.800 L14 14.500 L10.500 8.800 Z" stroke="#000" stroke-width="1" fill="none" shape-rendering="crispEdges"/></svg>
<svg style="left:623px;top:118px" width="20" height="18" viewBox="0 0 20 18"><path d="M1.500 9.500 H18" stroke="#000" stroke-width="1" fill="none" shape-rendering="crispEdges"/><rect x="3.500" y="5.500" width="5" height="8" stroke="#000" stroke-width="1" fill="none" shape-rendering="crispEdges"/><path d="M13.500 2 L17.500 9.500 L13.500 17 L9.500 9.500 Z" stroke="#000" stroke-width="1" fill="none" shape-rendering="crispEdges"/></svg>
<svg style="left:655px;top:118px" width="18" height="18" viewBox="0 0 18 18"><path d="M8.500 0.500 V17.500" stroke="#000" stroke-width="1" fill="none" shape-rendering="crispEdges"/><rect x="4.500" y="2.500" width="8" height="6" stroke="#000" stroke-width="1" fill="none" shape-rendering="crispEdges"/><path d="M2.500 12 L8.500 8.500 L14.500 12 L8.500 16 Z" stroke="#000" stroke-width="1" fill="none" shape-rendering="crispEdges"/></svg>
<div class="a" style="left:682px;top:113px;width:1px;height:31px;background:#a0a0a0;"></div>
<div class="a" style="left:683px;top:113px;width:1px;height:31px;background:#fdfdfd;"></div>
<svg style="left:692px;top:121px" width="18" height="12" viewBox="0 0 18 12"><path d="M1 1.500 H4.500 V10.500 H1 M16 1.500 H12.500 V10.500 H16 M4.500 6 H12.500" stroke="#000" stroke-width="1" fill="none" shape-rendering="crispEdges" stroke-width="1.200"/><path d="M6 6 L7.500 4.500 V7.500 Z M11 6 L9.500 4.500 V7.500 Z" fill="#000"/></svg>
<svg style="left:726px;top:118px" width="14" height="18" viewBox="0 0 14 18"><path d="M2.500 1.500 V4.500 H10.500 V1.500 M2.500 17 V14 H10.500 V17 M6.500 4.500 V14" stroke="#000" stroke-width="1" fill="none" shape-rendering="crispEdges" stroke-width="1.200"/><path d="M6.500 5 L5 7.500 H8 Z M6.500 13.500 L5 11 H8 Z" fill="#000"/></svg>
<svg style="left:754px;top:122px" width="18" height="11" viewBox="0 0 18 11"><rect x="1.200" y="1.700" width="15.800" height="8" stroke="#000" stroke-width="1" fill="none" shape-rendering="crispEdges" stroke-width="1.500"/><path d="M3.500 4 H14.500 M3.500 7.500 H14.500" stroke="#000" stroke-width="1" fill="none" shape-rendering="crispEdges" stroke-width="0.900"/><path d="M3.500 3.500 V8 M14.500 3.500 V8" stroke="#000" stroke-width="1.300" stroke-dasharray="1.200 2.300" fill="none"/></svg>
<svg style="left:788px;top:119px" width="11" height="17" viewBox="0 0 11 17"><rect x="1.200" y="1.200" width="8.600" height="13.800" stroke="#000" stroke-width="1" fill="none" shape-rendering="crispEdges" stroke-width="1.500"/><path d="M3.800 3.500 V12.800 M7.200 3.500 V12.800" stroke="#000" stroke-width="1" fill="none" shape-rendering="crispEdges" stroke-width="0.900"/><path d="M3.300 3.500 H7.700 M3.300 12.800 H7.700" stroke="#000" stroke-width="1.300" stroke-dasharray="1.200 2.200" fill="none"/></svg>
<svg style="left:817px;top:119px" width="18" height="17" viewBox="0 0 18 17"><rect x="1.200" y="1.500" width="14.800" height="14" stroke="#000" stroke-width="1" fill="none" shape-rendering="crispEdges" stroke-width="1.500"/><path d="M8.500 1.500 V15.500 M1 8.500 H16" stroke="#000" stroke-width="1" fill="none" shape-rendering="crispEdges" stroke-width="1.500"/><path d="M3.300 3.800 L5.300 5.800 M13.700 3.800 L11.700 5.800 M3.300 13.200 L5.300 11.200 M13.700 13.200 L11.700 11.200" stroke="#000" stroke-width="1" fill="none" shape-rendering="crispEdges" stroke-width="1"/><path d="M6.500 3.500 V5 M10.500 3.500 V5 M6.500 12 V13.500 M10.500 12 V13.500" stroke="#000" stroke-width="1" fill="none" shape-rendering="crispEdges" stroke-width="0.700"/></svg>
<div class="a" style="left:843px;top:113px;width:1px;height:31px;background:#a0a0a0;"></div>
<div class="a" style="left:844px;top:113px;width:1px;height:31px;background:#fdfdfd;"></div>
<svg style="left:853px;top:118px" width="18" height="18" viewBox="0 0 18 18"><path d="M2.500 2.500 H17 M2.500 2.500 V16.500" stroke="#000" stroke-width="1" fill="none" shape-rendering="crispEdges" stroke-width="1.200"/><path d="M13 13 L6 6" stroke="#000" stroke-width="1" fill="none" shape-rendering="crispEdges"/><path d="M5.500 9.500 V5.500 H9.500" stroke="#ff0000" stroke-width="1.200" fill="none"/><rect x="1" y="1" width="3.200" height="3.200" fill="#0000ff"/></svg>
<svg style="left:884px;top:118px" width="18" height="18" viewBox="0 0 18 18"><path d="M1 2.500 H15.500 M15.500 2.500 V16.500" stroke="#000" stroke-width="1" fill="none" shape-rendering="crispEdges" stroke-width="1.200"/><path d="M3 15 L12 6" stroke="#000" stroke-width="1" fill="none" shape-rendering="crispEdges"/><path d="M8.500 5.500 H12.500 V9.500" stroke="#ff0000" stroke-width="1.200" fill="none"/><rect x="14" y="1" width="3.200" height="3.200" fill="#0000ff"/></svg>
<svg style="left:915px;top:118px" width="18" height="18" viewBox="0 0 18 18"><path d="M15.500 1 V15.500 M1 15.500 H15.500" stroke="#000" stroke-width="1" fill="none" shape-rendering="crispEdges" stroke-width="1.200"/><path d="M3 3 L12 12" stroke="#000" stroke-width="1" fill="none" shape-rendering="crispEdges"/><path d="M12.500 8.500 V12.500 H8.500" stroke="#ff0000" stroke-width="1.200" fill="none"/><rect x="14" y="14" width="3.200" height="3.200" fill="#0000ff"/></svg>
<svg style="left:946px;top:118px" width="12" height="18" viewBox="0 0 12 18"><path d="M2.500 1 V15.500 M2.500 15.500 H12" stroke="#000" stroke-width="1" fill="none" shape-rendering="crispEdges" stroke-width="1.200"/><path d="M12 5 L5 12" stroke="#000" stroke-width="1" fill="none" shape-rendering="crispEdges"/><path d="M5.500 8.500 V12.500 H9.500" stroke="#ff0000" stroke-width="1.200" fill="none"/><rect x="1" y="14" width="3.200" height="3.200" fill="#0000ff"/></svg>
<div class="a" style="left:30px;top:146px;width:630px;height:20px;background:#fafafa;"></div>
<div class="a" style="left:30px;top:165px;width:21px;height:735px;background:#fafafa;"></div>
<div class="a" style="left:29px;top:144px;width:2px;height:756px;background:#787878;"></div>
<div class="a" style="left:0px;top:144px;width:29px;height:1px;background:#bcbcbc;"></div>
<div class="a" style="left:0px;top:145px;width:29px;height:1px;background:#f8f8f8;"></div>
<div class="a" style="left:29px;top:143px;width:632px;height:1px;background:#c4c4c4;"></div>
<div class="a" style="left:29px;top:144px;width:632px;height:1px;background:#989898;"></div>
<div class="a" style="left:29px;top:145px;width:632px;height:1px;background:#828282;"></div>
<div class="a" style="left:51px;top:166px;width:591px;height:716px;background:#ffffff;"></div>
<svg style="left:0px;top:0px" width="958" height="939" viewBox="0 0 958 939"><g fill="#000" shape-rendering="crispEdges"><rect x="654" y="159" width="1" height="3"/><rect x="647" y="159" width="1" height="3"/><rect x="640" y="159" width="1" height="3"/><rect x="634" y="159" width="1" height="3"/><rect x="627" y="156" width="1" height="6"/><rect x="620" y="159" width="1" height="3"/><rect x="614" y="159" width="1" height="3"/><rect x="607" y="159" width="1" height="3"/><rect x="600" y="159" width="1" height="3"/><rect x="593" y="146" width="1" height="16"/><rect x="587" y="159" width="1" height="3"/><rect x="580" y="159" width="1" height="3"/><rect x="573" y="159" width="1" height="3"/><rect x="567" y="159" width="1" height="3"/><rect x="560" y="156" width="1" height="6"/><rect x="553" y="159" width="1" height="3"/><rect x="547" y="159" width="1" height="3"/><rect x="540" y="159" width="1" height="3"/><rect x="533" y="159" width="1" height="3"/><rect x="526" y="146" width="1" height="16"/><rect x="520" y="159" width="1" height="3"/><rect x="513" y="159" width="1" height="3"/><rect x="506" y="159" width="1" height="3"/><rect x="500" y="159" width="1" height="3"/><rect x="493" y="156" width="1" height="6"/><rect x="486" y="159" width="1" height="3"/><rect x="479" y="159" width="1" height="3"/><rect x="473" y="159" width="1" height="3"/><rect x="466" y="159" width="1" height="3"/><rect x="459" y="146" width="1" height="16"/><rect x="453" y="159" width="1" height="3"/><rect x="446" y="159" width="1" height="3"/><rect x="439" y="159" width="1" height="3"/><rect x="433" y="159" width="1" height="3"/><rect x="426" y="156" width="1" height="6"/><rect x="419" y="159" width="1" height="3"/><rect x="412" y="159" width="1" height="3"/><rect x="406" y="159" width="1" height="3"/><rect x="399" y="159" width="1" height="3"/><rect x="392" y="146" width="1" height="16"/><rect x="386" y="159" width="1" height="3"/><rect x="379" y="159" width="1" height="3"/><rect x="372" y="159" width="1" height="3"/><rect x="365" y="159" width="1" height="3"/><rect x="359" y="156" width="1" height="6"/><rect x="352" y="159" width="1" height="3"/><rect x="345" y="159" width="1" height="3"/><rect x="339" y="159" width="1" height="3"/><rect x="332" y="159" width="1" height="3"/><rect x="325" y="146" width="1" height="16"/><rect x="319" y="159" width="1" height="3"/><rect x="312" y="159" width="1" height="3"/><rect x="305" y="159" width="1" height="3"/><rect x="298" y="159" width="1" height="3"/><rect x="292" y="156" width="1" height="6"/><rect x="285" y="159" width="1" height="3"/><rect x="278" y="159" width="1" height="3"/><rect x="272" y="159" width="1" height="3"/><rect x="265" y="159" width="1" height="3"/><rect x="258" y="146" width="1" height="16"/><rect x="251" y="159" width="1" height="3"/><rect x="245" y="159" width="1" height="3"/><rect x="238" y="159" width="1" height="3"/><rect x="231" y="159" width="1" height="3"/><rect x="225" y="156" width="1" height="6"/><rect x="218" y="159" width="1" height="3"/><rect x="211" y="159" width="1" height="3"/><rect x="205" y="159" width="1" height="3"/><rect x="198" y="159" width="1" height="3"/><rect x="191" y="146" width="1" height="16"/><rect x="184" y="159" width="1" height="3"/><rect x="178" y="159" width="1" height="3"/><rect x="171" y="159" width="1" height="3"/><rect x="164" y="159" width="1" height="3"/><rect x="158" y="156" width="1" height="6"/><rect x="151" y="159" width="1" height="3"/><rect x="144" y="159" width="1" height="3"/><rect x="138" y="159" width="1" height="3"/><rect x="131" y="159" width="1" height="3"/><rect x="124" y="146" width="1" height="16"/><rect x="117" y="159" width="1" height="3"/><rect x="111" y="159" width="1" height="3"/><rect x="104" y="159" width="1" height="3"/><rect x="97" y="159" width="1" height="3"/><rect x="91" y="156" width="1" height="6"/><rect x="84" y="159" width="1" height="3"/><rect x="77" y="159" width="1" height="3"/><rect x="70" y="159" width="1" height="3"/><rect x="64" y="159" width="1" height="3"/><rect x="57" y="146" width="1" height="16"/></g></svg>
<div class="a" style="left:51px;top:146px;width:6.0px;height:14px;overflow:hidden;"><div class="t" style="right:0.4px;top:1.450px;font-size:12px;transform-origin:100% 0;transform:scaleX(0.917);font-family:'DejaVu Sans',sans-serif;font-weight:bold;color:#15152c;">700.0</div></div>
<div class="t" style="left:88.8px;top:147.450px;font-size:12px;transform-origin:0 0;transform:scaleX(0.917);font-family:'DejaVu Sans',sans-serif;font-weight:bold;color:#15152c;">600.0</div>
<div class="t" style="left:155.8px;top:147.450px;font-size:12px;transform-origin:0 0;transform:scaleX(0.917);font-family:'DejaVu Sans',sans-serif;font-weight:bold;color:#15152c;">500.0</div>
<div class="t" style="left:222.8px;top:147.450px;font-size:12px;transform-origin:0 0;transform:scaleX(0.917);font-family:'DejaVu Sans',sans-serif;font-weight:bold;color:#15152c;">400.0</div>
<div class="t" style="left:289.8px;top:147.450px;font-size:12px;transform-origin:0 0;transform:scaleX(0.917);font-family:'DejaVu Sans',sans-serif;font-weight:bold;color:#15152c;">300.0</div>
<div class="t" style="left:356.8px;top:147.450px;font-size:12px;transform-origin:0 0;transform:scaleX(0.917);font-family:'DejaVu Sans',sans-serif;font-weight:bold;color:#15152c;">200.0</div>
<div class="t" style="left:423.8px;top:147.450px;font-size:12px;transform-origin:0 0;transform:scaleX(0.917);font-family:'DejaVu Sans',sans-serif;font-weight:bold;color:#15152c;">100.0</div>
<div class="t" style="left:506.1px;top:147.450px;font-size:12px;transform-origin:0 0;transform:scaleX(0.917);font-family:'DejaVu Sans',sans-serif;font-weight:bold;color:#15152c;">0.0</div>
<div class="t" style="left:553.2px;top:147.450px;font-size:12px;transform-origin:0 0;transform:scaleX(0.917);font-family:'DejaVu Sans',sans-serif;font-weight:bold;color:#15152c;">-100.0</div>
<div class="a" style="left:47px;top:146px;width:1px;height:754px;background:#e2e2e2;"></div>
<div class="a" style="left:48px;top:146px;width:1px;height:754px;background:#b0b0b0;"></div>
<div class="a" style="left:49px;top:146px;width:1px;height:754px;background:#4a4a4a;"></div>
<div class="a" style="left:50px;top:146px;width:1px;height:754px;background:#000;"></div>
<div class="a" style="left:31px;top:162px;width:629px;height:1px;background:#e2e2e2;"></div>
<div class="a" style="left:31px;top:163px;width:629px;height:1px;background:#b0b0b0;"></div>
<div class="a" style="left:31px;top:164px;width:629px;height:1px;background:#4a4a4a;"></div>
<div class="a" style="left:31px;top:165px;width:629px;height:1px;background:#000;"></div>
<div class="a" style="left:31px;top:146px;width:16px;height:16px;background:#fafafa;"></div>
<div class="a" style="left:488px;top:146px;width:2px;height:16px;background:#000;"></div>
<div class="a" style="left:32px;top:177.5px;width:15px;height:1.8px;background:#000;"></div>
<svg style="left:0px;top:0px" width="958" height="939" viewBox="0 0 958 939"><g fill="#000" shape-rendering="crispEdges"><rect x="44" y="173" width="3" height="1"/><rect x="44" y="179" width="3" height="1"/><rect x="44" y="186" width="3" height="1"/><rect x="31" y="193" width="16" height="1"/><rect x="44" y="199" width="3" height="1"/><rect x="44" y="206" width="3" height="1"/><rect x="44" y="213" width="3" height="1"/><rect x="44" y="220" width="3" height="1"/><rect x="42" y="226" width="5" height="1"/><rect x="44" y="233" width="3" height="1"/><rect x="44" y="240" width="3" height="1"/><rect x="44" y="246" width="3" height="1"/><rect x="44" y="253" width="3" height="1"/><rect x="31" y="260" width="16" height="1"/><rect x="44" y="266" width="3" height="1"/><rect x="44" y="273" width="3" height="1"/><rect x="44" y="280" width="3" height="1"/><rect x="44" y="287" width="3" height="1"/><rect x="42" y="293" width="5" height="1"/><rect x="44" y="300" width="3" height="1"/><rect x="44" y="307" width="3" height="1"/><rect x="44" y="313" width="3" height="1"/><rect x="44" y="320" width="3" height="1"/><rect x="31" y="327" width="16" height="1"/><rect x="44" y="334" width="3" height="1"/><rect x="44" y="340" width="3" height="1"/><rect x="44" y="347" width="3" height="1"/><rect x="44" y="354" width="3" height="1"/><rect x="42" y="360" width="5" height="1"/><rect x="44" y="367" width="3" height="1"/><rect x="44" y="374" width="3" height="1"/><rect x="44" y="380" width="3" height="1"/><rect x="44" y="387" width="3" height="1"/><rect x="31" y="394" width="16" height="1"/><rect x="44" y="401" width="3" height="1"/><rect x="44" y="407" width="3" height="1"/><rect x="44" y="414" width="3" height="1"/><rect x="44" y="421" width="3" height="1"/><rect x="42" y="427" width="5" height="1"/><rect x="44" y="434" width="3" height="1"/><rect x="44" y="441" width="3" height="1"/><rect x="44" y="447" width="3" height="1"/><rect x="44" y="454" width="3" height="1"/><rect x="31" y="461" width="16" height="1"/><rect x="44" y="468" width="3" height="1"/><rect x="44" y="474" width="3" height="1"/><rect x="44" y="481" width="3" height="1"/><rect x="44" y="488" width="3" height="1"/><rect x="42" y="494" width="5" height="1"/><rect x="44" y="501" width="3" height="1"/><rect x="44" y="508" width="3" height="1"/><rect x="44" y="515" width="3" height="1"/><rect x="44" y="521" width="3" height="1"/><rect x="31" y="528" width="16" height="1"/><rect x="44" y="535" width="3" height="1"/><rect x="44" y="541" width="3" height="1"/><rect x="44" y="548" width="3" height="1"/><rect x="44" y="555" width="3" height="1"/><rect x="42" y="561" width="5" height="1"/><rect x="44" y="568" width="3" height="1"/><rect x="44" y="575" width="3" height="1"/><rect x="44" y="582" width="3" height="1"/><rect x="44" y="588" width="3" height="1"/><rect x="31" y="595" width="16" height="1"/><rect x="44" y="602" width="3" height="1"/><rect x="44" y="608" width="3" height="1"/><rect x="44" y="615" width="3" height="1"/><rect x="44" y="622" width="3" height="1"/><rect x="42" y="629" width="5" height="1"/><rect x="44" y="635" width="3" height="1"/><rect x="44" y="642" width="3" height="1"/><rect x="44" y="649" width="3" height="1"/><rect x="44" y="655" width="3" height="1"/><rect x="31" y="662" width="16" height="1"/><rect x="44" y="669" width="3" height="1"/><rect x="44" y="675" width="3" height="1"/><rect x="44" y="682" width="3" height="1"/><rect x="44" y="689" width="3" height="1"/><rect x="42" y="696" width="5" height="1"/><rect x="44" y="702" width="3" height="1"/><rect x="44" y="709" width="3" height="1"/><rect x="44" y="716" width="3" height="1"/><rect x="44" y="722" width="3" height="1"/><rect x="31" y="729" width="16" height="1"/><rect x="44" y="736" width="3" height="1"/><rect x="44" y="743" width="3" height="1"/><rect x="44" y="749" width="3" height="1"/><rect x="44" y="756" width="3" height="1"/><rect x="42" y="763" width="5" height="1"/><rect x="44" y="769" width="3" height="1"/><rect x="44" y="776" width="3" height="1"/><rect x="44" y="783" width="3" height="1"/><rect x="44" y="789" width="3" height="1"/><rect x="31" y="796" width="16" height="1"/><rect x="44" y="803" width="3" height="1"/><rect x="44" y="810" width="3" height="1"/><rect x="44" y="816" width="3" height="1"/><rect x="44" y="823" width="3" height="1"/><rect x="42" y="830" width="5" height="1"/><rect x="44" y="836" width="3" height="1"/><rect x="44" y="843" width="3" height="1"/><rect x="44" y="850" width="3" height="1"/><rect x="44" y="856" width="3" height="1"/><rect x="31" y="863" width="16" height="1"/><rect x="44" y="870" width="3" height="1"/><rect x="44" y="877" width="3" height="1"/><rect x="44" y="883" width="3" height="1"/><rect x="44" y="890" width="3" height="1"/><rect x="42" y="897" width="5" height="1"/></g></svg>
<div class="a" style="left:31px;top:166px;width:16px;height:27.0px;overflow:hidden;"><div class="t" style="left:2.1px;top:26.9px;transform-origin:0 0;transform:rotate(-90deg) scaleX(0.917);font-size:12px;font-family:'DejaVu Sans',sans-serif;font-weight:bold;color:#15152c;">-200.0</div></div>
<div class="t" style="left:33.1px;top:259.9px;transform-origin:0 0;transform:rotate(-90deg) scaleX(0.917);font-size:12px;font-family:'DejaVu Sans',sans-serif;font-weight:bold;color:#15152c;">-100.0</div>
<div class="t" style="left:33.1px;top:326.9px;transform-origin:0 0;transform:rotate(-90deg) scaleX(0.917);font-size:12px;font-family:'DejaVu Sans',sans-serif;font-weight:bold;color:#15152c;">0.0</div>
<div class="t" style="left:33.1px;top:393.9px;transform-origin:0 0;transform:rotate(-90deg) scaleX(0.917);font-size:12px;font-family:'DejaVu Sans',sans-serif;font-weight:bold;color:#15152c;">100.0</div>
<div class="t" style="left:33.1px;top:460.9px;transform-origin:0 0;transform:rotate(-90deg) scaleX(0.917);font-size:12px;font-family:'DejaVu Sans',sans-serif;font-weight:bold;color:#15152c;">200.0</div>
<div class="t" style="left:33.1px;top:527.9px;transform-origin:0 0;transform:rotate(-90deg) scaleX(0.917);font-size:12px;font-family:'DejaVu Sans',sans-serif;font-weight:bold;color:#15152c;">300.0</div>
<div class="t" style="left:33.1px;top:594.9px;transform-origin:0 0;transform:rotate(-90deg) scaleX(0.917);font-size:12px;font-family:'DejaVu Sans',sans-serif;font-weight:bold;color:#15152c;">400.0</div>
<div class="t" style="left:33.1px;top:661.9px;transform-origin:0 0;transform:rotate(-90deg) scaleX(0.917);font-size:12px;font-family:'DejaVu Sans',sans-serif;font-weight:bold;color:#15152c;">500.0</div>
<div class="t" style="left:33.1px;top:728.9px;transform-origin:0 0;transform:rotate(-90deg) scaleX(0.917);font-size:12px;font-family:'DejaVu Sans',sans-serif;font-weight:bold;color:#15152c;">600.0</div>
<div class="t" style="left:33.1px;top:795.9px;transform-origin:0 0;transform:rotate(-90deg) scaleX(0.917);font-size:12px;font-family:'DejaVu Sans',sans-serif;font-weight:bold;color:#15152c;">700.0</div>
<div class="t" style="left:33.1px;top:862.9px;transform-origin:0 0;transform:rotate(-90deg) scaleX(0.917);font-size:12px;font-family:'DejaVu Sans',sans-serif;font-weight:bold;color:#15152c;">800.0</div>
<div class="a" style="left:642px;top:166px;width:1px;height:717px;background:#000;"></div>
<div class="a" style="left:51px;top:882px;width:592px;height:1px;background:#000;"></div>
<svg style="left:0px;top:0px" width="958" height="939" viewBox="0 0 958 939"><path d="M493.5 328 V593" stroke="#a39e8a" stroke-width="1" stroke-dasharray="3 3" fill="none" shape-rendering="crispEdges"/><path d="M459.5 328 V593" stroke="#a39e8a" stroke-width="1" stroke-dasharray="3 3" fill="none" shape-rendering="crispEdges"/><path d="M426.5 328 V593" stroke="#a39e8a" stroke-width="1" stroke-dasharray="3 3" fill="none" shape-rendering="crispEdges"/><path d="M392.5 328 V593" stroke="#a39e8a" stroke-width="1" stroke-dasharray="3 3" fill="none" shape-rendering="crispEdges"/><path d="M359.5 328 V593" stroke="#a39e8a" stroke-width="1" stroke-dasharray="3 3" fill="none" shape-rendering="crispEdges"/><path d="M325.5 328 V593" stroke="#a39e8a" stroke-width="1" stroke-dasharray="3 3" fill="none" shape-rendering="crispEdges"/><path d="M292.5 328 V593" stroke="#a39e8a" stroke-width="1" stroke-dasharray="3 3" fill="none" shape-rendering="crispEdges"/><path d="M258.5 328 V593" stroke="#a39e8a" stroke-width="1" stroke-dasharray="3 3" fill="none" shape-rendering="crispEdges"/><path d="M225.5 328 V593" stroke="#a39e8a" stroke-width="1" stroke-dasharray="3 3" fill="none" shape-rendering="crispEdges"/><path d="M191.5 328 V593" stroke="#a39e8a" stroke-width="1" stroke-dasharray="3 3" fill="none" shape-rendering="crispEdges"/><path d="M158.5 328 V593" stroke="#a39e8a" stroke-width="1" stroke-dasharray="3 3" fill="none" shape-rendering="crispEdges"/><path d="M125 360.5 H524" stroke="#a39e8a" stroke-width="1" stroke-dasharray="3 3" fill="none" shape-rendering="crispEdges"/><path d="M125 394.5 H524" stroke="#a39e8a" stroke-width="1" stroke-dasharray="3 3" fill="none" shape-rendering="crispEdges"/><path d="M125 427.5 H524" stroke="#a39e8a" stroke-width="1" stroke-dasharray="3 3" fill="none" shape-rendering="crispEdges"/><path d="M125 461.5 H524" stroke="#a39e8a" stroke-width="1" stroke-dasharray="3 3" fill="none" shape-rendering="crispEdges"/><path d="M125 495.5 H524" stroke="#a39e8a" stroke-width="1" stroke-dasharray="3 3" fill="none" shape-rendering="crispEdges"/><path d="M125 528.5 H524" stroke="#a39e8a" stroke-width="1" stroke-dasharray="3 3" fill="none" shape-rendering="crispEdges"/><path d="M125 562.5 H524" stroke="#a39e8a" stroke-width="1" stroke-dasharray="3 3" fill="none" shape-rendering="crispEdges"/><rect x="124" y="326.900" width="401" height="267" fill="none" stroke="#000" stroke-width="2.100"/><path d="M217.500 370.500 L258.500 397.500" stroke="#ff0000" stroke-width="1"/><rect x="251.800" y="363" width="14" height="14" fill="#00ff00" stroke="#000" stroke-width="1.300"/><rect x="257.500" y="363" width="8.500" height="8.500" fill="#000"/><rect x="211.0" y="364.3" width="6.200" height="6.200" fill="#808080" stroke="#000" stroke-width="1.100"/><rect x="211.0" y="381.1" width="6.200" height="6.200" fill="#808080" stroke="#000" stroke-width="1.100"/><rect x="211.0" y="397.9" width="6.200" height="6.200" fill="#808080" stroke="#000" stroke-width="1.100"/><rect x="234.8" y="364.3" width="6.200" height="6.200" fill="#808080" stroke="#000" stroke-width="1.100"/><rect x="234.8" y="397.9" width="6.200" height="6.200" fill="#808080" stroke="#000" stroke-width="1.100"/><rect x="258.8" y="364.3" width="6.200" height="6.200" fill="#808080" stroke="#000" stroke-width="1.100"/><rect x="258.8" y="381.1" width="6.200" height="6.200" fill="#808080" stroke="#000" stroke-width="1.100"/><rect x="258.8" y="397.9" width="6.200" height="6.200" fill="#808080" stroke="#000" stroke-width="1.100"/><path d="M234.500 380.500 L242.500 388.500 M242.500 380.500 L234.500 388.500" stroke="#ff00ff" stroke-width="1.700"/><path d="M524 327.500 H500" stroke="#0000ff" stroke-width="3"/><path d="M495.500 327.500 L505.800 322 L504 327.500 L505.800 333 Z" fill="#0000ff" stroke="#0000ff" stroke-width="0.800"/><path d="M526.300 329 V352" stroke="#0000ff" stroke-width="3"/><path d="M526.300 358.800 L520.800 348.200 L526.300 350.200 L531.800 348.200 Z" fill="#0000ff" stroke="#0000ff" stroke-width="0.800"/><rect x="523" y="324" width="6" height="6" fill="#ff0000"/></svg>
<div class="a" style="left:643px;top:166px;width:17px;height:716px;background:linear-gradient(90deg,#f8f8f8 0,#efefef 12%,#f0f0f0 88%,#fafafa 100%);"></div>
<div class="a" style="left:51px;top:883px;width:591px;height:17px;background:linear-gradient(#f8f8f8 0,#efefef 12%,#f0f0f0 88%,#fafafa 100%);"></div>
<div class="a" style="left:642px;top:883px;width:18px;height:17px;background:#f0f0f0;"></div>
<div class="a" style="left:644px;top:499px;width:15px;height:15px;box-sizing:border-box;border:1px solid #979797;border-radius:2.5px;background:linear-gradient(90deg,#f5f5f5 0,#e9e9eb 48%,#d9d9dd 52%,#c6c6cb 100%);box-shadow:inset 0 0 0 1px #fbfbfb;"></div>
<div class="a" style="left:384px;top:884px;width:15px;height:15px;box-sizing:border-box;border:1px solid #979797;border-radius:2.5px;background:linear-gradient(#f5f5f5 0,#e9e9eb 48%,#d9d9dd 52%,#c6c6cb 100%);box-shadow:inset 0 0 0 1px #fbfbfb;"></div>
<svg style="left:0px;top:0px" width="958" height="939" viewBox="0 0 958 939"><path d="M648.500 176.200 L652 172.200 L655.500 176.200 Z" fill="#505050"/><path d="M648.500 872 L652 876 L655.500 872 Z" fill="#505050"/>
<path d="M59.500 887.500 L55.500 891.500 L59.500 895.500 Z" fill="#505050"/><path d="M632 887.500 L636 891.500 L632 895.500 Z" fill="#505050"/></svg>
<div class="a" style="left:660px;top:146px;width:2px;height:754px;background:#fdfdfd;"></div>
<div class="a" style="left:3px;top:149px;width:2px;height:2px;background:#fdfdfd;"></div>
<div class="a" style="left:2px;top:148px;width:2px;height:2px;background:#c0c0c0;"></div>
<div class="a" style="left:8px;top:149px;width:2px;height:2px;background:#fdfdfd;"></div>
<div class="a" style="left:7px;top:148px;width:2px;height:2px;background:#c0c0c0;"></div>
<div class="a" style="left:13px;top:149px;width:2px;height:2px;background:#fdfdfd;"></div>
<div class="a" style="left:12px;top:148px;width:2px;height:2px;background:#c0c0c0;"></div>
<div class="a" style="left:18px;top:149px;width:2px;height:2px;background:#fdfdfd;"></div>
<div class="a" style="left:17px;top:148px;width:2px;height:2px;background:#c0c0c0;"></div>
<div class="a" style="left:23px;top:149px;width:2px;height:2px;background:#fdfdfd;"></div>
<div class="a" style="left:22px;top:148px;width:2px;height:2px;background:#c0c0c0;"></div>
<div class="a" style="left:0;top:154px;width:29px;height:29px;box-sizing:border-box;border:1px solid #707070;border-left:none;border-radius:0 4px 4px 0;background:linear-gradient(#f8f8f8,#f2f2f2);box-shadow:inset 0 0 0 1px #fdfdfd;"></div>
<div class="a" style="left:0px;top:217px;width:28px;height:1px;background:#a8a8a8;"></div>
<div class="a" style="left:0px;top:218px;width:28px;height:1px;background:#fbfbfb;"></div>
<div class="a" style="left:0px;top:440px;width:28px;height:1px;background:#a8a8a8;"></div>
<div class="a" style="left:0px;top:441px;width:28px;height:1px;background:#fbfbfb;"></div>
<div class="a" style="left:0px;top:477px;width:28px;height:1px;background:#a8a8a8;"></div>
<div class="a" style="left:0px;top:478px;width:28px;height:1px;background:#fbfbfb;"></div>
<div class="a" style="left:0px;top:514px;width:28px;height:1px;background:#a8a8a8;"></div>
<div class="a" style="left:0px;top:515px;width:28px;height:1px;background:#fbfbfb;"></div>
<div class="a" style="left:0px;top:551px;width:28px;height:1px;background:#a8a8a8;"></div>
<div class="a" style="left:0px;top:552px;width:28px;height:1px;background:#fbfbfb;"></div>
<div class="a" style="left:0px;top:679px;width:28px;height:1px;background:#a8a8a8;"></div>
<div class="a" style="left:0px;top:680px;width:28px;height:1px;background:#fbfbfb;"></div>
<svg width="0" height="0" style="left:0;top:0"><defs>
<linearGradient id="gArr" x1="0" y1="0" x2="1" y2="1"><stop offset="0" stop-color="#ffffff"/><stop offset="0.45" stop-color="#ffffff"/><stop offset="1" stop-color="#8fdcb0"/></linearGradient>
<linearGradient id="gNode" x1="0" y1="0" x2="0" y2="1"><stop offset="0" stop-color="#f0f2fa"/><stop offset="1" stop-color="#a8b4d8"/></linearGradient>
<linearGradient id="gYel" x1="0" y1="0" x2="1" y2="1"><stop offset="0" stop-color="#ffc400"/><stop offset="1" stop-color="#fff000"/></linearGradient>
<radialGradient id="gCam" cx="0.55" cy="0.35" r="0.7"><stop offset="0" stop-color="#ffffff"/><stop offset="0.6" stop-color="#dfe4ea"/><stop offset="1" stop-color="#a8b0bc"/></radialGradient>
<radialGradient id="gLensB" cx="0.4" cy="0.35" r="0.7"><stop offset="0" stop-color="#60b8f0"/><stop offset="1" stop-color="#104c90"/></radialGradient>
<linearGradient id="gBase" x1="0" y1="0" x2="0" y2="1"><stop offset="0" stop-color="#f8c060"/><stop offset="1" stop-color="#e08818"/></linearGradient>
<radialGradient id="gRsq" cx="0.5" cy="0.75" r="0.8"><stop offset="0" stop-color="#f87068"/><stop offset="1" stop-color="#c01028"/></radialGradient>
</defs></svg>
<svg style="left:0px;top:0px" width="958" height="939" viewBox="0 0 958 939"><path d="M7.500 157.500 L20.500 165.500 L15.500 167.500 L19.500 174 L16 176.500 L12 169.500 L8 173 Z" fill="url(#gArr)" stroke="#1c6430" stroke-width="1.150" stroke-linejoin="round"/><path d="M3 195 Q12 188.500 22 188.500" stroke="#707070" stroke-width="1.300" fill="none"/><path d="M9.500 191 L21.500 202.500 Q14 203.500 10.500 207.500 Z" fill="url(#gNode)" stroke="#1c1c24" stroke-width="1.100" stroke-linejoin="round"/><rect x="8.2" y="189.2" width="2.600" height="2.600" fill="#f4f9ff" stroke="#1878d0" stroke-width="0.900"/><path d="M5.500 242.500 L20.500 227.500" stroke="#686868" stroke-width="1.400"/><rect x="4.2" y="241.2" width="2.600" height="2.600" fill="#f4f9ff" stroke="#1878d0" stroke-width="0.900"/><rect x="19.2" y="226.2" width="2.600" height="2.600" fill="#f4f9ff" stroke="#1878d0" stroke-width="0.900"/><path d="M4.500 275.500 L13.500 266.500 L21.500 258.500" stroke="#686868" stroke-width="1.400" fill="none"/><rect x="3.2" y="274.2" width="2.600" height="2.600" fill="#f4f9ff" stroke="#1878d0" stroke-width="0.900"/><rect x="12.2" y="265.2" width="2.600" height="2.600" fill="#f4f9ff" stroke="#1878d0" stroke-width="0.900"/><rect x="20.2" y="257.2" width="2.600" height="2.600" fill="#f4f9ff" stroke="#1878d0" stroke-width="0.900"/><path d="M3.500 302.500 L14.500 294.500 M5.500 290.500 L14.500 294.500 Q19 297 21.500 305.500 M14.500 294.500 L22.500 299.500" stroke="#686868" stroke-width="1.500" fill="none"/><rect x="4.2" y="289.2" width="2.600" height="2.600" fill="#f4f9ff" stroke="#1878d0" stroke-width="0.900"/><rect x="13.2" y="293.2" width="2.600" height="2.600" fill="#f4f9ff" stroke="#1878d0" stroke-width="0.900"/><rect x="2.2" y="301.2" width="2.600" height="2.600" fill="#f4f9ff" stroke="#1878d0" stroke-width="0.900"/><rect x="21.2" y="298.2" width="2.600" height="2.600" fill="#f4f9ff" stroke="#1878d0" stroke-width="0.900"/><rect x="20.2" y="304.2" width="2.600" height="2.600" fill="#f4f9ff" stroke="#1878d0" stroke-width="0.900"/><rect x="3.500" y="319.500" width="19" height="18" fill="url(#gYel)" stroke="#8890c0" stroke-width="0.900"/><circle cx="3.5" cy="319.5" r="1.300" fill="#f4f8ff" stroke="#4068d0" stroke-width="0.900"/><circle cx="22.5" cy="319.5" r="1.300" fill="#f4f8ff" stroke="#4068d0" stroke-width="0.900"/><circle cx="3.5" cy="337.5" r="1.300" fill="#f4f8ff" stroke="#4068d0" stroke-width="0.900"/><circle cx="22.5" cy="337.5" r="1.300" fill="#f4f8ff" stroke="#4068d0" stroke-width="0.900"/><path d="M3.500 359.500 A10 5.600 0 0 1 23.500 359.500 Q23 362.500 17.500 365 H9.500 Q4 362.500 3.500 359.500 Z" fill="url(#gYel)" stroke="#8890c0" stroke-width="0.900"/><circle cx="13.500" cy="354.300" r="1.300" fill="#f4f8ff" stroke="#1878d0" stroke-width="0.900"/><path d="M6.500 398.500 V388 H4.500 V385.500 H6.500 V384.500 Q6.500 382 9.500 382 H11.500 V384.500 H10 Q9.500 384.500 9.500 385.500 H11.800 V388 H9.500 V398.500 Z" fill="#ffd820" stroke="#907010" stroke-width="0.900"/><path d="M13.500 380.500 H21.800 V382.800 H19 V397 H21.800 V399.500 H13.500 V397 H16.300 V382.800 H13.500 Z" fill="#20b8f0" stroke="#106890" stroke-width="0.900"/><path d="M14 414.500 V429.500 M6.500 422 H21.500 M8.500 416.500 L19.500 427.500 M19.500 416.500 L8.500 427.500" stroke="#000" stroke-width="1"/><rect x="12.500" y="420.500" width="3" height="3" fill="#e8f0ff" stroke="#3060e0" stroke-width="0.900"/><ellipse cx="14" cy="468" rx="9" ry="3.500" fill="url(#gBase)"/><path d="M8 464 Q14 467 20 464 L19 468 H9 Z" fill="#f0a030"/><circle cx="15.500" cy="457" r="9.300" fill="url(#gCam)"/><circle cx="8" cy="457" r="5.800" fill="#f0a028"/><circle cx="7.300" cy="457" r="4.600" fill="#f8c870"/><circle cx="6.500" cy="457" r="3.700" fill="url(#gLensB)"/><rect x="2" y="485" width="22" height="21" fill="#fff" stroke="#003080" stroke-width="2"/><rect x="4.6" y="487.2" width="1.800" height="1.800" fill="#1818e0"/><rect x="4.6" y="490.9" width="1.800" height="1.800" fill="#1818e0"/><rect x="4.6" y="494.7" width="1.800" height="1.800" fill="#1818e0"/><rect x="4.6" y="498.4" width="1.800" height="1.800" fill="#1818e0"/><rect x="4.6" y="502.2" width="1.800" height="1.800" fill="#1818e0"/><rect x="8.4" y="487.2" width="1.800" height="1.800" fill="#1818e0"/><rect x="8.4" y="490.9" width="1.800" height="1.800" fill="#1818e0"/><rect x="8.4" y="494.7" width="1.800" height="1.800" fill="#1818e0"/><rect x="8.4" y="498.4" width="1.800" height="1.800" fill="#1818e0"/><rect x="8.4" y="502.2" width="1.800" height="1.800" fill="#1818e0"/><rect x="12.2" y="487.2" width="1.800" height="1.800" fill="#1818e0"/><rect x="12.2" y="490.9" width="1.800" height="1.800" fill="#1818e0"/><rect x="12.2" y="494.7" width="1.800" height="1.800" fill="#1818e0"/><rect x="12.2" y="498.4" width="1.800" height="1.800" fill="#1818e0"/><rect x="12.2" y="502.2" width="1.800" height="1.800" fill="#1818e0"/><rect x="16.0" y="487.2" width="1.800" height="1.800" fill="#1818e0"/><rect x="16.0" y="490.9" width="1.800" height="1.800" fill="#1818e0"/><rect x="16.0" y="494.7" width="1.800" height="1.800" fill="#1818e0"/><rect x="16.0" y="498.4" width="1.800" height="1.800" fill="#1818e0"/><rect x="16.0" y="502.2" width="1.800" height="1.800" fill="#1818e0"/><rect x="19.8" y="487.2" width="1.800" height="1.800" fill="#1818e0"/><rect x="19.8" y="490.9" width="1.800" height="1.800" fill="#1818e0"/><rect x="19.8" y="494.7" width="1.800" height="1.800" fill="#1818e0"/><rect x="19.8" y="498.4" width="1.800" height="1.800" fill="#1818e0"/><rect x="19.8" y="502.2" width="1.800" height="1.800" fill="#1818e0"/><path d="M4.500 525 L21.500 542 M21.500 525 L4.500 542" stroke="#a8d0d0" stroke-width="5.500" opacity="0.800" transform="translate(0.800,-0.800)"/><path d="M4 525 L22 542 M22 525 L4 542" stroke="#ff0000" stroke-width="5"/><path d="M3 578.500 H11.500 V562.500 Z M25 578.500 H16.500 V562.500 Z" fill="#ffd800" stroke="#403000" stroke-width="0.800"/><path d="M14 558.500 V581" stroke="#0000ff" stroke-width="1.600"/><path d="M23 590.500 V598 H7 Z M23 611.500 V603.500 H7 Z" fill="#ffd800" stroke="#403000" stroke-width="0.800"/><path d="M3 600.700 H25" stroke="#0000ff" stroke-width="1.600"/><rect x="7" y="620" width="13.500" height="14.500" fill="#d8d8d8"/><rect x="7.500" y="620.500" width="12.500" height="13.500" fill="url(#gRsq)"/><path d="M3 622 V641 H23" stroke="#1020a0" stroke-width="1.300" fill="none"/><path d="M3 620.500 L1 624 H5 Z M25 641 L21.500 639 V643 Z" fill="#1020a0"/><path d="M3.500 640.500 L6.500 635.500 L8 638 Z" fill="#205040"/><rect x="4.5" y="653.5" width="5" height="5" fill="#e8f2fc" stroke="#000" stroke-width="1"/><rect x="4.5" y="660.5" width="5" height="5" fill="#e8f2fc" stroke="#000" stroke-width="1"/><rect x="4.5" y="667.5" width="5" height="5" fill="#e8f2fc" stroke="#000" stroke-width="1"/><rect x="11.7" y="653.5" width="5" height="5" fill="#e8f2fc" stroke="#000" stroke-width="1"/><rect x="11.7" y="660.5" width="5" height="5" fill="#e8f2fc" stroke="#000" stroke-width="1"/><rect x="11.7" y="667.5" width="5" height="5" fill="#e8f2fc" stroke="#000" stroke-width="1"/><rect x="18.9" y="653.5" width="5" height="5" fill="#e8f2fc" stroke="#000" stroke-width="1"/><rect x="18.9" y="660.5" width="5" height="5" fill="#e8f2fc" stroke="#000" stroke-width="1"/><rect x="18.9" y="667.5" width="5" height="5" fill="#e8f2fc" stroke="#000" stroke-width="1"/></svg>
<div class="a" style="left:666px;top:145px;width:292px;height:755px;background:#f0f0f0;"></div>
<div class="a" style="left:666px;top:150px;width:274px;height:1px;background:#ffffff;"></div>
<div class="a" style="left:666px;top:151px;width:274px;height:1px;background:#a0a0a0;"></div>
<div class="a" style="left:666px;top:154px;width:274px;height:1px;background:#ffffff;"></div>
<div class="a" style="left:666px;top:155px;width:274px;height:1px;background:#a0a0a0;"></div>
<div class="a" style="left:939px;top:150px;width:1px;height:6px;background:#a0a0a0;"></div>
<svg style="left:945px;top:149px" width="9" height="9" viewBox="0 0 9 9"><path d="M1.500 1.500 L6.500 6.500 M6.500 1.500 L1.500 6.500" stroke="#000" stroke-width="1.700"/></svg>
<div class="a" style="left:667px;top:181px;width:287px;height:408px;box-sizing:border-box;border:1px solid #8c8e96;border-right-color:#fbfbfb;background:#fff;"></div>
<div class="a" style="left:670px;top:184px;width:282px;height:402px;background:#f0f0f0;"></div>
<div class="tab" style="left:712.5px;width:44px;"></div>
<div class="t" style="left:716.5px;top:167.6px;font-size:11px;letter-spacing:0.161px;">Output</div>
<div class="tab" style="left:757.5px;width:41px;"></div>
<div class="t" style="left:762px;top:167.6px;font-size:11px;letter-spacing:-0.354px;">Doc</div>
<div class="tab" style="left:799.5px;width:41px;"></div>
<div class="t" style="left:804.3px;top:167.6px;font-size:11px;letter-spacing:-0.559px;">User</div>
<div class="tab" style="left:841.7px;width:40.5px;"></div>
<div class="t" style="left:846.8px;top:167.6px;font-size:11px;letter-spacing:0.078px;">Test</div>
<div class="tab" style="left:883.5px;width:58px;"></div>
<div class="t" style="left:888.8px;top:167.6px;font-size:11px;letter-spacing:-0.191px;">Transform</div>
<div class="a" style="left:667px;top:161px;width:46px;height:22px;box-sizing:border-box;border:1px solid #8e8f8f;border-bottom:none;background:#fff;"></div>
<div class="t" style="left:674.5px;top:165.7px;font-size:11px;letter-spacing:0.008px;">Work</div>
<div class="a" style="left:671px;top:184px;width:279px;height:163px;box-sizing:border-box;border:1px solid #828790;background:#fff;box-shadow:0 0 0 1px #fff;"></div>
<div class="a" style="left:672px;top:185px;width:277px;height:23px;background:linear-gradient(#ffffff 0%,#ffffff 45%,#f3f4f6 55%,#f0f1f3 100%);"></div>
<div class="a" style="left:672px;top:208px;width:277px;height:1px;background:#e0e3e8;"></div>
<div class="a" style="left:722px;top:185px;width:1px;height:23px;background:#e2e4e8;"></div>
<div class="a" style="left:847px;top:185px;width:1px;height:23px;background:#e2e4e8;"></div>
<div class="a" style="left:898px;top:185px;width:1px;height:23px;background:#e2e4e8;"></div>
<div class="a" style="left:947px;top:185px;width:1px;height:23px;background:#e2e4e8;"></div>
<div class="t" style="left:678.5px;top:192.7px;font-size:11px;letter-spacing:-0.106px;">Layer</div>
<div class="t" style="left:771.5px;top:192.7px;font-size:11px;letter-spacing:-0.383px;">Mode</div>
<div class="t" style="left:855.5px;top:192.7px;font-size:11px;letter-spacing:0.161px;">Output</div>
<div class="t" style="left:911px;top:192.7px;font-size:11px;letter-spacing:-0.281px;">Hide</div>
<div class="a" style="left:672px;top:226px;width:276px;height:1px;background:#f0f0f0;"></div>
<div class="a" style="left:672px;top:243px;width:276px;height:1px;background:#f0f0f0;"></div>
<div class="a" style="left:672px;top:260px;width:276px;height:1px;background:#f0f0f0;"></div>
<div class="a" style="left:672px;top:277px;width:276px;height:1px;background:#f0f0f0;"></div>
<div class="a" style="left:672px;top:294px;width:276px;height:1px;background:#f0f0f0;"></div>
<div class="a" style="left:672px;top:311px;width:276px;height:1px;background:#f0f0f0;"></div>
<div class="a" style="left:672px;top:328px;width:276px;height:1px;background:#f0f0f0;"></div>
<div class="a" style="left:722.5px;top:209px;width:1px;height:137px;background:#f0f0f0;"></div>
<div class="a" style="left:847.5px;top:209px;width:1px;height:137px;background:#f0f0f0;"></div>
<div class="a" style="left:898.5px;top:209px;width:1px;height:137px;background:#f0f0f0;"></div>
<div class="a" style="left:673px;top:210px;width:49px;height:16px;background:#000;"></div>
<div class="a" style="left:724px;top:210px;width:123px;height:16px;background:#0000c8;"></div>
<div class="a" style="left:849px;top:210px;width:49px;height:16px;background:#0000c8;"></div>
<div class="a" style="left:899px;top:210px;width:49px;height:16px;background:#0000c8;"></div>
<div class="t" style="left:776px;top:212.7px;font-size:11px;letter-spacing:0.292px;color:#fff;">Cut</div>
<div class="t" style="left:863.5px;top:212.7px;font-size:11px;letter-spacing:0.516px;color:#fff;">Yes</div>
<div class="t" style="left:915.5px;top:212.7px;font-size:11px;letter-spacing:0.219px;color:#fff;">No</div>
<div class="a" style="left:671px;top:348px;width:279px;height:104px;box-sizing:border-box;border:1px solid #828790;background:#fff;box-shadow:0 0 0 1px #fff;"></div>
<div class="a" style="left:673px;top:350px;width:135px;height:100px;background:#e9e9e9;"></div>
<div class="a" style="left:673px;top:350px;width:135px;height:18px;background:#dcdcdc;"></div>
<div class="a" style="left:809px;top:368px;width:139px;height:1px;background:#e8e8e8;"></div>
<div class="t" style="left:675.5px;top:354.2px;font-size:11px;letter-spacing:-0.359px;">Color</div>
<div class="a" style="left:673px;top:369px;width:135px;height:19px;background:#dcdcdc;"></div>
<div class="a" style="left:809px;top:388px;width:139px;height:1px;background:#e8e8e8;"></div>
<div class="t" style="left:675.5px;top:374.2px;font-size:11px;letter-spacing:-0.023px;">MinPower(%)-1</div>
<div class="t" style="left:813px;top:375.2px;font-size:11px;">50</div>
<div class="a" style="left:673px;top:389px;width:135px;height:19px;background:#dcdcdc;"></div>
<div class="a" style="left:809px;top:408px;width:139px;height:1px;background:#e8e8e8;"></div>
<div class="t" style="left:675.5px;top:394.2px;font-size:11px;letter-spacing:0.011px;">MaxPower(%)-1</div>
<div class="t" style="left:813px;top:395.2px;font-size:11px;">50</div>
<div class="a" style="left:673px;top:409px;width:135px;height:19px;background:#dcdcdc;"></div>
<div class="a" style="left:809px;top:428px;width:139px;height:1px;background:#e8e8e8;"></div>
<div class="t" style="left:675.5px;top:414.2px;font-size:11px;letter-spacing:-0.276px;">Speed(mm/s)</div>
<div class="t" style="left:813px;top:415.2px;font-size:11px;">20</div>
<div class="a" style="left:673px;top:429px;width:135px;height:21px;background:#dcdcdc;"></div>
<div class="t" style="left:675.5px;top:434.2px;font-size:11px;letter-spacing:-0.029px;">Priority</div>
<div class="t" style="left:813px;top:435.2px;font-size:11px;">1</div>
<div class="a" style="left:812px;top:352px;width:134px;height:15px;background:#000;"></div>
<div class="btn" style="left:674px;top:454px;width:42px;height:19px;border-color:#3c7fb1;background:linear-gradient(#f0f6fb 0%,#e6f0f8 48%,#d6e4ee 52%,#cfdde8 100%);box-shadow:inset 0 0 0 1px #48d0f8,inset 0 0 0 2px #c8eefb;"></div>
<div class="a" style="left:676px;top:456px;width:38px;height:15px;box-sizing:border-box;border:1px dotted #000;"></div>
<div class="t" style="left:678.7px;top:459px;font-size:11px;letter-spacing:-0.190px;">Laser1</div>
<div class="btn" style="left:720px;top:454px;width:42px;height:19px;"></div>
<div class="t" style="left:724.5px;top:459px;font-size:11px;letter-spacing:-0.107px;">Laser2</div>
<div class="grp" style="left:671.5px;top:482px;width:282.5px;height:101px;border-right:none;border-radius:3px 0 0 3px;"></div>
<div class="a" style="left:677px;top:479px;width:91px;height:9px;background:#f0f0f0;"></div>
<div class="t" style="left:679px;top:478px;font-size:11px;letter-spacing:-0.193px;">Line/column setup</div>
<div class="t" style="left:705px;top:492.2px;font-size:11px;letter-spacing:-0.578px;">Num</div>
<div class="t" style="left:759px;top:492.2px;font-size:11px;letter-spacing:-0.272px;">space</div>
<div class="t" style="left:821px;top:492.2px;font-size:11px;letter-spacing:-0.210px;">Dislocation</div>
<div class="t" style="left:903.5px;top:492.2px;font-size:11px;letter-spacing:-0.203px;">Mirror</div>
<div class="t" style="left:679.5px;top:513.5px;font-size:11px;letter-spacing:-0.453px;">X:</div>
<div class="t" style="left:679.5px;top:534.5px;font-size:11px;letter-spacing:-0.148px;">Y:</div>
<div class="inp" style="left:698px;top:507px;width:38px;height:20px;border-color:#dcdfe4;border-top-color:#c4c8cf;border-radius:1px;"><span class="t" style="left:5px;top:3.800px;font-size:11px;">1</span></div>
<div class="inp" style="left:739px;top:507px;width:71px;height:20px;border-color:#dcdfe4;border-top-color:#c4c8cf;border-radius:1px;"><span class="t" style="left:5px;top:3.800px;font-size:11px;">0.000</span></div>
<div class="inp" style="left:812px;top:507px;width:71px;height:20px;border-color:#dcdfe4;border-top-color:#c4c8cf;border-radius:1px;"><span class="t" style="left:5px;top:3.800px;font-size:11px;">0.000</span></div>
<div class="inp" style="left:698px;top:528px;width:38px;height:20px;border-color:#dcdfe4;border-top-color:#c4c8cf;border-radius:1px;"><span class="t" style="left:5px;top:3.800px;font-size:11px;">1</span></div>
<div class="inp" style="left:739px;top:528px;width:71px;height:20px;border-color:#dcdfe4;border-top-color:#c4c8cf;border-radius:1px;"><span class="t" style="left:5px;top:3.800px;font-size:11px;">0.000</span></div>
<div class="inp" style="left:812px;top:528px;width:71px;height:20px;border-color:#dcdfe4;border-top-color:#c4c8cf;border-radius:1px;"><span class="t" style="left:5px;top:3.800px;font-size:11px;">0.000</span></div>
<div class="a" style="left:887px;top:507px;width:63px;height:42px;box-sizing:border-box;border:1px solid #646464;"></div>
<div class="cb" style="left:892px;top:511px;"></div>
<div class="t" style="left:907.5px;top:513.2px;font-size:11px;letter-spacing:-0.953px;">H</div>
<div class="cb" style="left:920px;top:511px;"></div>
<div class="t" style="left:935px;top:513.2px;font-size:11px;letter-spacing:-0.344px;">V</div>
<div class="cb" style="left:892px;top:530.5px;"></div>
<div class="t" style="left:907.5px;top:532.7px;font-size:11px;letter-spacing:-0.953px;">H</div>
<div class="cb" style="left:920px;top:530.5px;"></div>
<div class="t" style="left:935px;top:532.7px;font-size:11px;letter-spacing:-0.344px;">V</div>
<div class="a" style="left:674px;top:548px;width:30px;height:33px;box-sizing:border-box;background:#f0f0f0;border:1px solid;border-color:#fff #696969 #696969 #fff;box-shadow:inset -1px -1px 0 #a0a0a0;"></div>
<svg style="left:677px;top:552px" width="25" height="25" viewBox="0 0 25 25"><rect x="0.500" y="0.500" width="24" height="24" fill="#fff" stroke="#000" stroke-width="1"/>
<path d="M4.500 5 V21 M4.500 4.500 H19" stroke="#000" stroke-width="1"/><path d="M20.500 4.500 L17.500 3 V6 Z M4.500 22.500 L3 19.500 H6 Z" fill="#000"/>
<rect x="3" y="3" width="3" height="3" fill="#0000ff"/>
<rect x="9.500" y="9.500" width="3" height="3" fill="#00e8e8" stroke="#000" stroke-width="1"/><rect x="15.500" y="9.500" width="3" height="3" fill="#00e8e8" stroke="#000" stroke-width="1"/>
<rect x="9.500" y="15.500" width="3" height="3" fill="#00e8e8" stroke="#000" stroke-width="1"/><rect x="15.500" y="15.500" width="3" height="3" fill="#00e8e8" stroke="#000" stroke-width="1"/></svg>
<div class="btn" style="left:707px;top:554px;width:79px;height:24px;"></div>
<div class="t" style="left:716.75px;top:561.1px;font-size:11px;letter-spacing:0.030px;">Virtual array</div>
<div class="btn" style="left:790px;top:554px;width:75px;height:24px;"></div>
<div class="t" style="left:802.0px;top:561.1px;font-size:11px;letter-spacing:0.270px;">Bestrew...</div>
<div class="btn" style="left:869px;top:554px;width:76px;height:24px;"></div>
<div class="t" style="left:891.5px;top:561.1px;font-size:11px;letter-spacing:0.070px;">Adjust</div>
<div class="a" style="left:662px;top:654px;width:296px;height:1px;background:#a0a0a0;"></div>
<div class="a" style="left:662px;top:655px;width:296px;height:1px;background:#fff;"></div>
<div class="a" style="left:666px;top:660px;width:274px;height:1px;background:#ffffff;"></div>
<div class="a" style="left:666px;top:661px;width:274px;height:1px;background:#a0a0a0;"></div>
<div class="a" style="left:666px;top:664px;width:274px;height:1px;background:#ffffff;"></div>
<div class="a" style="left:666px;top:665px;width:274px;height:1px;background:#a0a0a0;"></div>
<div class="a" style="left:939px;top:660px;width:1px;height:6px;background:#a0a0a0;"></div>
<svg style="left:945px;top:659px" width="9" height="9" viewBox="0 0 9 9"><path d="M1.500 1.500 L6.500 6.500 M6.500 1.500 L1.500 6.500" stroke="#000" stroke-width="1.700"/></svg>
<div class="grp" style="left:669px;top:678px;width:286px;height:145px;"></div>
<div class="a" style="left:674px;top:673px;width:57px;height:10px;background:#f0f0f0;"></div>
<div class="t" style="left:676.3px;top:673.2px;font-size:11px;letter-spacing:-0.180px;">Laser work</div>
<div class="btn" style="left:678px;top:688px;width:90px;height:21px;"></div>
<div class="t" style="left:710.75px;top:693.6px;font-size:11px;letter-spacing:0.253px;">Start</div>
<div class="btn" style="left:771px;top:688px;width:99px;height:21px;"></div>
<div class="t" style="left:782.25px;top:693.6px;font-size:11px;letter-spacing:-0.127px;">Pause/Continue</div>
<div class="btn" style="left:873.5px;top:688px;width:70px;height:21px;"></div>
<div class="t" style="left:897.75px;top:693.6px;font-size:11px;letter-spacing:-0.285px;">Stop</div>
<div class="btn" style="left:678px;top:713px;width:90px;height:21px;"></div>
<div class="t" style="left:693.5px;top:718.6px;font-size:11px;letter-spacing:-0.305px;">SaveToUFile</div>
<div class="btn" style="left:771px;top:713px;width:99px;height:21px;"></div>
<div class="t" style="left:791.5px;top:718.6px;font-size:11px;letter-spacing:-0.064px;">UFileOutput</div>
<div class="btn" style="left:873.5px;top:713px;width:70px;height:21px;"></div>
<div class="t" style="left:885.0px;top:718.6px;font-size:11px;letter-spacing:-0.240px;">Download</div>
<div class="t" style="left:727.2px;top:749.6px;font-size:11px;letter-spacing:-0.134px;">Position:</div>
<div class="btn" style="left:773px;top:739px;width:173px;height:21px;"></div>
<div class="t" style="left:777px;top:744.7px;font-size:11px;letter-spacing:-0.041px;">Current position</div>
<svg style="left:933px;top:747px" width="8" height="5" viewBox="0 0 8 5"><path d="M0 0 H7 L3.500 4 Z" fill="#000"/></svg>
<div class="cb" style="left:677px;top:771px;"></div>
<svg style="left:677px;top:771px" width="13" height="13" viewBox="0 0 13 13"><path d="M3 5.500 L5.500 10 L10 2.500" stroke="#3a4a9c" stroke-width="1.700" fill="none"/></svg>
<div class="t" style="left:692.5px;top:773.3px;font-size:11px;letter-spacing:-0.243px;">Path optimize</div>
<div class="cb" style="left:677px;top:786px;"></div>
<div class="t" style="left:692.5px;top:788.3px;font-size:11px;letter-spacing:-0.066px;">Output select graphics</div>
<div class="cb" style="left:694px;top:804px;border-color:#bcbcbc;background:#f8f8f8;box-shadow:inset 0 0 0 1px #fdfdfd,inset 0 0 0 2px #ececec;"></div>
<div class="t" style="left:710px;top:806.3px;font-size:11px;letter-spacing:-0.189px;color:#838383;">Selected graphics position</div>
<div class="btn" style="left:873.5px;top:771px;width:70px;height:21px;"></div>
<div class="t" style="left:886.75px;top:776.6px;font-size:11px;letter-spacing:-0.262px;">Cut scale</div>
<div class="btn" style="left:873.5px;top:796px;width:70px;height:21px;"></div>
<div class="t" style="left:888.75px;top:801.6px;font-size:11px;letter-spacing:-0.490px;">Go scale</div>
<div class="grp" style="left:669px;top:833px;width:286px;height:42px;"></div>
<div class="a" style="left:674px;top:828px;width:37px;height:10px;background:#f0f0f0;"></div>
<div class="t" style="left:676.3px;top:828.5px;font-size:11px;letter-spacing:-0.271px;">Device</div>
<div class="btn" style="left:677px;top:846px;width:90.5px;height:21px;"></div>
<div class="t" style="left:694.0px;top:851.6px;font-size:11px;letter-spacing:0.072px;">Port setting</div>
<div class="btn" style="left:773px;top:847px;width:173px;height:21px;"></div>
<div class="t" style="left:777px;top:852.7px;font-size:11px;letter-spacing:-0.092px;">Device---(USB:Auto)</div>
<svg style="left:933px;top:855px" width="8" height="5" viewBox="0 0 8 5"><path d="M0 0 H7 L3.500 4 Z" fill="#000"/></svg>
<div class="a" style="left:0px;top:900px;width:958px;height:39px;background:#f0f0f0;"></div>
<div class="a" style="left:0px;top:900px;width:661px;height:3px;background:#fbfbfb;"></div>
<div class="a" style="left:0px;top:900px;width:30px;height:1px;background:#b4b4b4;"></div>
<div class="a" style="left:662px;top:900px;width:296px;height:1px;background:#a0a0a0;"></div>
<div class="a" style="left:662px;top:901px;width:296px;height:1px;background:#fbfbfb;"></div>
<svg style="left:1.2px;top:907.5px" width="9" height="9" viewBox="0 0 9 9"><path d="M1.500 1.500 L6.500 6.500 M6.500 1.500 L1.500 6.500" stroke="#000" stroke-width="1.700"/></svg>
<div class="a" style="left:3px;top:921px;width:5px;height:8px;border-left:1px solid #b4b4b4;border-right:1px solid #b4b4b4;box-sizing:border-box;"></div>
<div class="a" style="left:3px;top:929px;width:6px;height:1px;background:#c8c8c8;"></div>
<div class="a" style="left:18.0px;top:905px;width:24px;height:25px;box-sizing:border-box;background:#000000;border:1px solid #9c9c9c;"></div>
<div class="a" style="left:43.5px;top:905px;width:24px;height:25px;box-sizing:border-box;background:#0000ff;border:1px solid #9c9c9c;"></div>
<div class="a" style="left:69.0px;top:905px;width:24px;height:25px;box-sizing:border-box;background:#ff0000;border:1px solid #9c9c9c;"></div>
<div class="a" style="left:94.5px;top:905px;width:24px;height:25px;box-sizing:border-box;background:#00ff00;border:1px solid #9c9c9c;"></div>
<div class="a" style="left:120.0px;top:905px;width:24px;height:25px;box-sizing:border-box;background:#fa8072;border:1px solid #9c9c9c;"></div>
<div class="a" style="left:145.5px;top:905px;width:24px;height:25px;box-sizing:border-box;background:#ffff00;border:1px solid #9c9c9c;"></div>
<div class="a" style="left:171.0px;top:905px;width:24px;height:25px;box-sizing:border-box;background:#1e90ff;border:1px solid #9c9c9c;"></div>
<div class="a" style="left:196.5px;top:905px;width:24px;height:25px;box-sizing:border-box;background:#8b3612;border:1px solid #9c9c9c;"></div>
<div class="a" style="left:222.0px;top:905px;width:24px;height:25px;box-sizing:border-box;background:#808000;border:1px solid #9c9c9c;"></div>
<div class="a" style="left:247.5px;top:905px;width:24px;height:25px;box-sizing:border-box;background:#008060;border:1px solid #9c9c9c;"></div>
<div class="a" style="left:273.0px;top:905px;width:24px;height:25px;box-sizing:border-box;background:#ff4500;border:1px solid #9c9c9c;"></div>
<div class="a" style="left:298.5px;top:905px;width:24px;height:25px;box-sizing:border-box;background:#400080;border:1px solid #9c9c9c;"></div>
<div class="a" style="left:324.0px;top:905px;width:24px;height:25px;box-sizing:border-box;background:#ffd0d8;border:1px solid #9c9c9c;"></div>
<div class="a" style="left:349.5px;top:905px;width:24px;height:25px;box-sizing:border-box;background:#b0a0f8;border:1px solid #9c9c9c;"></div>
<div class="a" style="left:375.0px;top:905px;width:24px;height:25px;box-sizing:border-box;background:#d4fc98;border:1px solid #9c9c9c;"></div>
<div class="a" style="left:400.0px;top:905px;width:24px;height:25px;box-sizing:border-box;background:#fa9058;border:1px solid #9c9c9c;"></div>
<div class="a" style="left:426.0px;top:905px;width:24px;height:25px;box-sizing:border-box;background:#db7093;border:1px solid #9c9c9c;"></div>
<div class="a" style="left:451.0px;top:905px;width:24px;height:25px;box-sizing:border-box;background:#8870dc;border:1px solid #9c9c9c;"></div>
<div class="a" style="left:477.0px;top:905px;width:24px;height:25px;box-sizing:border-box;background:#74dc74;border:1px solid #9c9c9c;"></div>
<div class="a" style="left:502.0px;top:905px;width:24px;height:25px;box-sizing:border-box;background:#b0a074;border:1px solid #9c9c9c;"></div>
<div class="a" style="left:18.2px;top:905.3px;width:22px;height:24.5px;background:#000;"></div>
<div class="a" style="left:40.2px;top:905px;width:2px;height:25px;background:#f4f4f4;"></div>
<div class="a" style="left:0px;top:933px;width:958px;height:1px;background:#b4b4b4;"></div>
<div class="a" style="left:0px;top:934px;width:958px;height:1px;background:#fdfdfd;"></div>
<div class="a" style="left:0px;top:935px;width:958px;height:1px;background:#fdfdfd;"></div>
<div class="a" style="left:0px;top:936px;width:958px;height:1px;background:#b0b0b0;"></div>
<div class="a" style="left:0px;top:937px;width:958px;height:1px;background:#f6f6f6;"></div>
<div class="a" style="left:0px;top:938px;width:958px;height:1px;background:#b4b4b4;"></div>
<div class="a" style="left:443px;top:938px;width:2px;height:1px;background:#f0f0f0;"></div>
<div class="a" style="left:466px;top:938px;width:2px;height:1px;background:#f0f0f0;"></div>
<div class="a" style="left:478px;top:938px;width:2px;height:1px;background:#f0f0f0;"></div>
<svg style="left:0px;top:0px" width="958" height="939" viewBox="0 0 958 939"><rect x="808" y="43" width="43" height="35.500" fill="none" stroke="#ff0000" stroke-width="3.600"/>
<path d="M671 151.800 L780.500 95.500 L771.500 112 L809 78.800 L759 86 L777.500 91.500 L670.500 150.800 Z" fill="#ff0000" stroke="#ff0000" stroke-width="0.600" stroke-linejoin="round"/></svg>
</div>
</body>
</html>
